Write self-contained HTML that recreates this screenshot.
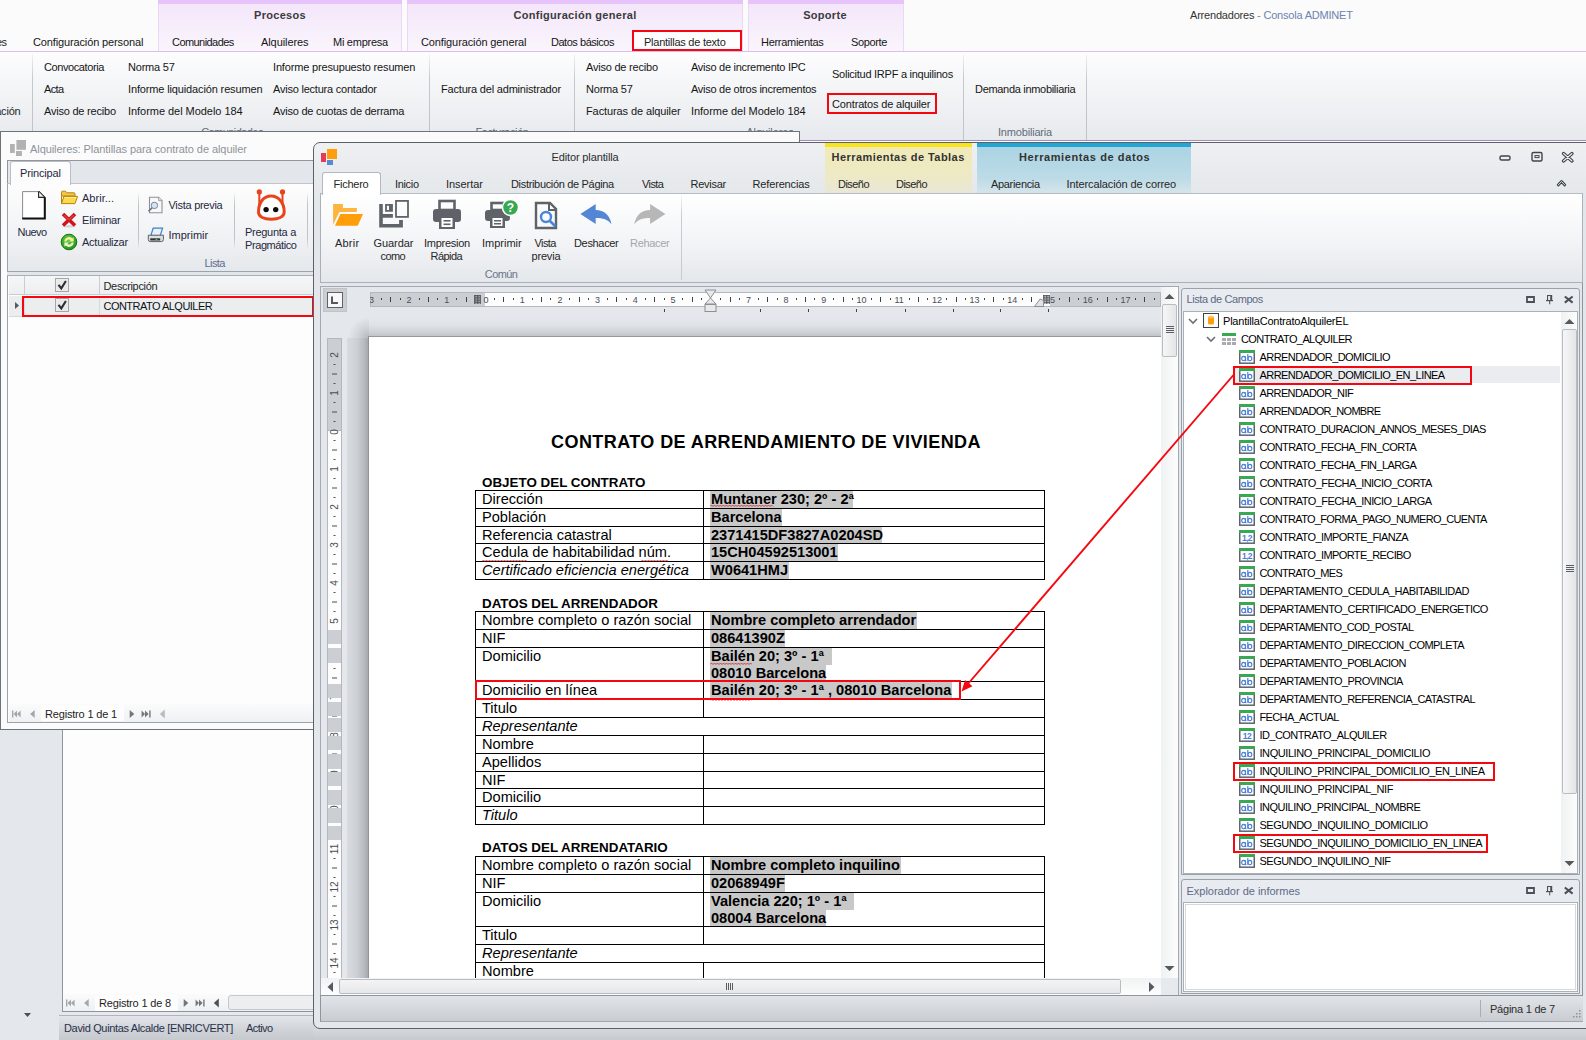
<!DOCTYPE html><html><head><meta charset="utf-8"><style>
html,body{margin:0;padding:0;}
body{width:1586px;height:1040px;overflow:hidden;position:relative;font-family:"Liberation Sans", sans-serif;background:#e4e7ec;}
div,svg{box-sizing:border-box;}
</style></head><body>

<div style="position:absolute;left:0px;top:0px;width:1586px;height:51px;background:#fbfbfb"></div>
<div style="position:absolute;left:158px;top:0px;width:244px;height:51px;background:linear-gradient(#f3e5fa,#faf5fc);border-left:1px solid #ead8f6;border-right:1px solid #ead8f6"></div>
<div style="position:absolute;left:158px;top:0px;width:244px;height:4px;background:#e6c3fa"></div>
<div style="position:absolute;top:8.19px;font-size:11px;line-height:14px;color:#3b3b3b;white-space:nowrap;font-weight:700;letter-spacing:0.3px;left:280px;transform:translateX(-50%);">Procesos</div>
<div style="position:absolute;left:407px;top:0px;width:336px;height:51px;background:linear-gradient(#f3e5fa,#faf5fc);border-left:1px solid #ead8f6;border-right:1px solid #ead8f6"></div>
<div style="position:absolute;left:407px;top:0px;width:336px;height:4px;background:#e6c3fa"></div>
<div style="position:absolute;top:8.19px;font-size:11px;line-height:14px;color:#3b3b3b;white-space:nowrap;font-weight:700;letter-spacing:0.3px;left:575px;transform:translateX(-50%);">Configuración general</div>
<div style="position:absolute;left:748px;top:0px;width:156px;height:51px;background:linear-gradient(#f3e5fa,#faf5fc);border-left:1px solid #ead8f6;border-right:1px solid #ead8f6"></div>
<div style="position:absolute;left:748px;top:0px;width:156px;height:4px;background:#e6c3fa"></div>
<div style="position:absolute;top:8.19px;font-size:11px;line-height:14px;color:#3b3b3b;white-space:nowrap;font-weight:700;letter-spacing:0.3px;left:825px;transform:translateX(-50%);">Soporte</div>
<div style="position:absolute;top:35.19px;font-size:11px;line-height:14px;color:#262626;white-space:nowrap;letter-spacing:-0.561px;right:1579.5px;">es</div>
<div style="position:absolute;top:35.19px;font-size:11px;line-height:14px;color:#161616;white-space:nowrap;letter-spacing:-0.133px;left:33px;">Configuración personal</div>
<div style="position:absolute;top:35.19px;font-size:11px;line-height:14px;color:#161616;white-space:nowrap;letter-spacing:-0.563px;left:172px;">Comunidades</div>
<div style="position:absolute;top:35.19px;font-size:11px;line-height:14px;color:#161616;white-space:nowrap;letter-spacing:-0.085px;left:261px;">Alquileres</div>
<div style="position:absolute;top:35.19px;font-size:11px;line-height:14px;color:#161616;white-space:nowrap;letter-spacing:-0.263px;left:333px;">Mi empresa</div>
<div style="position:absolute;top:35.19px;font-size:11px;line-height:14px;color:#161616;white-space:nowrap;letter-spacing:-0.112px;left:421px;">Configuración general</div>
<div style="position:absolute;top:35.19px;font-size:11px;line-height:14px;color:#161616;white-space:nowrap;letter-spacing:-0.469px;left:551px;">Datos básicos</div>
<div style="position:absolute;top:35.19px;font-size:11px;line-height:14px;color:#161616;white-space:nowrap;letter-spacing:-0.293px;left:761px;">Herramientas</div>
<div style="position:absolute;top:35.19px;font-size:11px;line-height:14px;color:#161616;white-space:nowrap;letter-spacing:-0.355px;left:851px;">Soporte</div>
<div style="position:absolute;left:632px;top:30px;width:110px;height:22px;background:#fdfdfd"></div>
<div style="position:absolute;top:35.19px;font-size:11px;line-height:14px;color:#1e1e1e;white-space:nowrap;letter-spacing:-0.246px;left:644px;">Plantillas de texto</div>
<div style="position:absolute;left:632px;top:30px;width:110px;height:21px;border:2px solid #f5070f"></div>
<div style="position:absolute;left:1190px;top:8px;font-size:11px;line-height:14px;white-space:nowrap;letter-spacing:-0.2px;color:#333">Arrendadores <span style="color:#6b83b0">- Consola ADMINET</span></div>
<div style="position:absolute;left:0px;top:51px;width:1586px;height:1px;background:#dcbcf0"></div>
<div style="position:absolute;left:0px;top:52px;width:1586px;height:89px;background:linear-gradient(#fdfdfe,#f3f4f6 45%,#e6e9ed)"></div>
<div style="position:absolute;left:0px;top:140px;width:1586px;height:1px;background:#a88cb8"></div>
<div style="position:absolute;left:32px;top:54px;width:1px;height:86px;background:linear-gradient(rgba(200,204,210,0.2),#c4c8ce 30%,#bfc3c9)"></div>
<div style="position:absolute;left:429px;top:54px;width:1px;height:86px;background:linear-gradient(rgba(200,204,210,0.2),#c4c8ce 30%,#bfc3c9)"></div>
<div style="position:absolute;left:574px;top:54px;width:1px;height:86px;background:linear-gradient(rgba(200,204,210,0.2),#c4c8ce 30%,#bfc3c9)"></div>
<div style="position:absolute;left:963px;top:54px;width:1px;height:86px;background:linear-gradient(rgba(200,204,210,0.2),#c4c8ce 30%,#bfc3c9)"></div>
<div style="position:absolute;left:1086px;top:54px;width:1px;height:86px;background:linear-gradient(rgba(200,204,210,0.2),#c4c8ce 30%,#bfc3c9)"></div>
<div style="position:absolute;top:104.19px;font-size:11px;line-height:14px;color:#262626;white-space:nowrap;letter-spacing:-0.191px;right:1565.5px;">Configuración</div>
<div style="position:absolute;top:60.19px;font-size:11px;line-height:14px;color:#161616;white-space:nowrap;letter-spacing:-0.409px;left:44px;">Convocatoria</div>
<div style="position:absolute;top:82.19px;font-size:11px;line-height:14px;color:#161616;white-space:nowrap;letter-spacing:-0.653px;left:44px;">Acta</div>
<div style="position:absolute;top:104.19px;font-size:11px;line-height:14px;color:#161616;white-space:nowrap;letter-spacing:-0.215px;left:44px;">Aviso de recibo</div>
<div style="position:absolute;top:60.19px;font-size:11px;line-height:14px;color:#161616;white-space:nowrap;letter-spacing:-0.204px;left:128px;">Norma 57</div>
<div style="position:absolute;top:82.19px;font-size:11px;line-height:14px;color:#161616;white-space:nowrap;letter-spacing:-0.139px;left:128px;">Informe liquidación resumen</div>
<div style="position:absolute;top:104.19px;font-size:11px;line-height:14px;color:#161616;white-space:nowrap;letter-spacing:-0.041px;left:128px;">Informe del Modelo 184</div>
<div style="position:absolute;top:60.19px;font-size:11px;line-height:14px;color:#161616;white-space:nowrap;letter-spacing:-0.167px;left:273px;">Informe presupuesto resumen</div>
<div style="position:absolute;top:82.19px;font-size:11px;line-height:14px;color:#161616;white-space:nowrap;letter-spacing:-0.22px;left:273px;">Aviso lectura contador</div>
<div style="position:absolute;top:104.19px;font-size:11px;line-height:14px;color:#161616;white-space:nowrap;letter-spacing:-0.218px;left:273px;">Aviso de cuotas de derrama</div>
<div style="position:absolute;top:82.19px;font-size:11px;line-height:14px;color:#161616;white-space:nowrap;letter-spacing:-0.191px;left:441px;">Factura del administrador</div>
<div style="position:absolute;top:60.19px;font-size:11px;line-height:14px;color:#161616;white-space:nowrap;letter-spacing:-0.215px;left:586px;">Aviso de recibo</div>
<div style="position:absolute;top:82.19px;font-size:11px;line-height:14px;color:#161616;white-space:nowrap;letter-spacing:-0.204px;left:586px;">Norma 57</div>
<div style="position:absolute;top:104.19px;font-size:11px;line-height:14px;color:#161616;white-space:nowrap;letter-spacing:-0.105px;left:586px;">Facturas de alquiler</div>
<div style="position:absolute;top:60.19px;font-size:11px;line-height:14px;color:#161616;white-space:nowrap;letter-spacing:-0.281px;left:691px;">Aviso de incremento IPC</div>
<div style="position:absolute;top:82.19px;font-size:11px;line-height:14px;color:#161616;white-space:nowrap;letter-spacing:-0.277px;left:691px;">Aviso de otros incrementos</div>
<div style="position:absolute;top:104.19px;font-size:11px;line-height:14px;color:#161616;white-space:nowrap;letter-spacing:-0.041px;left:691px;">Informe del Modelo 184</div>
<div style="position:absolute;top:67.19px;font-size:11px;line-height:14px;color:#161616;white-space:nowrap;letter-spacing:-0.256px;left:832px;">Solicitud IRPF a inquilinos</div>
<div style="position:absolute;top:97.19px;font-size:11px;line-height:14px;color:#161616;white-space:nowrap;letter-spacing:-0.152px;left:832px;">Contratos de alquiler</div>
<div style="position:absolute;top:82.19px;font-size:11px;line-height:14px;color:#161616;white-space:nowrap;letter-spacing:-0.307px;left:975px;">Demanda inmobiliaria</div>
<div style="position:absolute;top:125.19px;font-size:11px;line-height:14px;color:#5f6b7a;white-space:nowrap;letter-spacing:-0.563px;left:232px;transform:translateX(-50%);">Comunidades</div>
<div style="position:absolute;top:125.19px;font-size:11px;line-height:14px;color:#5f6b7a;white-space:nowrap;letter-spacing:-0.387px;left:502px;transform:translateX(-50%);">Facturación</div>
<div style="position:absolute;top:125.19px;font-size:11px;line-height:14px;color:#5f6b7a;white-space:nowrap;letter-spacing:-0.085px;left:770px;transform:translateX(-50%);">Alquileres</div>
<div style="position:absolute;top:125.19px;font-size:11px;line-height:14px;color:#5f6b7a;white-space:nowrap;letter-spacing:-0.185px;left:1025px;transform:translateX(-50%);">Inmobiliaria</div>
<div style="position:absolute;left:827px;top:93px;width:110px;height:21px;border:2px solid #f5070f"></div>
<div style="position:absolute;left:0px;top:141px;width:62px;height:874px;background:#e4e7ec"></div>
<div style="position:absolute;left:62px;top:141px;width:1524px;height:874px;background:#fdfdfd;border-left:1px solid #8f969e"></div>
<div style="position:absolute;left:63px;top:994px;width:1523px;height:17px;background:linear-gradient(#fbfbfb,#eef0f2)"></div>
<svg style="position:absolute;left:64.7px;top:996.5px" width="160" height="12" viewBox="0 0 160 12"><path d="M1 2.5h1.4v7H1z M2.6 6L6 2.5v7z M6 6L9.6 2.5v7z" fill="#a3a7ac"/><path d="M19.1 6L23.7 2v8z" fill="#a3a7ac"/><path d="M118.7 2v8L123.3 6z" fill="#72777d"/><path d="M130.6 2.5v7L134 6z M134 2.5v7L137.6 6z M138.2 2.5h1.4v7h-1.4z" fill="#72777d"/><path d="M153.8 1.5v9L148.8 6z" fill="#4d5258"/></svg>
<div style="position:absolute;left:95px;top:995px;width:83px;height:16px;background:#fdfdfd"></div>
<div style="position:absolute;top:995.69px;font-size:11px;line-height:14px;color:#1e1e1e;white-space:nowrap;letter-spacing:-0.181px;left:99px;">Registro 1 de 8</div>
<div style="position:absolute;left:228px;top:995px;width:1358px;height:15px;background:#eceef0;border:1px solid #c5c9ce;border-radius:3px"></div>
<div style="position:absolute;left:62px;top:1011px;width:1524px;height:4px;background:#e6e9ed;border-top:1px solid #8e949b"></div>
<div style="position:absolute;left:59px;top:1015px;width:1527px;height:25px;background:linear-gradient(#e2e5e9,#cfd2d6 60%,#c6c9ce);border-top:1px solid #b0b5bb"></div>
<svg style="position:absolute;left:22px;top:1011px" width="12" height="8" viewBox="0 0 12 8"><path d="M2 2h7l-3.5 4z" fill="#4a4f55"/></svg>
<div style="position:absolute;top:1021.19px;font-size:11px;line-height:14px;color:#27314a;white-space:nowrap;letter-spacing:-0.341px;left:64px;">David Quintas Alcalde [ENRICVERT]</div>
<div style="position:absolute;top:1021.19px;font-size:11px;line-height:14px;color:#27314a;white-space:nowrap;letter-spacing:-0.568px;left:246px;">Activo</div>
<div style="position:absolute;left:0px;top:131px;width:800px;height:599px;background:#fbfbfb;border:1px solid #6c737b"></div>
<svg style="position:absolute;left:9px;top:139px" width="18" height="18" viewBox="0 0 18 18"><rect x="7.4" y="1" width="9.6" height="9.8" fill="#b2b2b2"/><rect x="1" y="5" width="4.8" height="9" fill="#b2b2b2"/><rect x="7" y="12" width="5.9" height="5" fill="#b2b2b2"/></svg>
<div style="position:absolute;top:141.69px;font-size:11px;line-height:14px;color:#8e939a;white-space:nowrap;letter-spacing:-0.068px;left:30px;">Alquileres: Plantillas para contrato de alquiler</div>
<div style="position:absolute;left:7px;top:160px;width:793px;height:23px;background:#e3e6ea;border-top:1px solid #8f969e;border-left:1px solid #8f969e"></div>
<div style="position:absolute;left:7px;top:183px;width:793px;height:89px;background:linear-gradient(#fdfdfd,#f2f3f5 55%,#e5e8ec);border-left:1px solid #9ca3ab;border-top:1px solid #c1c6cc;border-bottom:1px solid #9ca3ab"></div>
<div style="position:absolute;left:10px;top:161px;width:61px;height:24px;background:linear-gradient(#fdfdfd,#fcfcfd);border:1px solid #b9bec5;border-bottom:none;border-radius:3px 3px 0 0"></div>
<div style="position:absolute;top:166.19px;font-size:11px;line-height:14px;color:#1f2940;white-space:nowrap;letter-spacing:-0.147px;left:20px;">Principal</div>
<div style="position:absolute;left:138px;top:193px;width:1px;height:56px;background:linear-gradient(rgba(190,195,200,0.1),#bfc4ca 20%,#bfc4ca 80%,rgba(190,195,200,0.1))"></div>
<div style="position:absolute;left:234px;top:193px;width:1px;height:56px;background:linear-gradient(rgba(190,195,200,0.1),#bfc4ca 20%,#bfc4ca 80%,rgba(190,195,200,0.1))"></div>
<div style="position:absolute;left:307px;top:193px;width:1px;height:56px;background:linear-gradient(rgba(190,195,200,0.1),#bfc4ca 20%,#bfc4ca 80%,rgba(190,195,200,0.1))"></div>
<svg style="position:absolute;left:21px;top:190px" width="26" height="30" viewBox="0 0 26 30"><path d="M1.6 1.6H17.6L23.8 7.8V28.6H1.6z" fill="#fff" stroke="#8a8a8a" stroke-width="1"/><path d="M17.6 1.6L23.8 7.8V28.6H1.2" fill="none" stroke="#111" stroke-width="2"/><path d="M17.6 1.6V7.4H23.4" fill="#f2f2f2" stroke="#222" stroke-width="1.1"/></svg>
<div style="position:absolute;top:225.19px;font-size:11px;line-height:14px;color:#1f2940;white-space:nowrap;letter-spacing:-0.562px;left:17.5px;">Nuevo</div>
<svg style="position:absolute;left:60px;top:190px" width="19" height="15" viewBox="0 0 19 15"><path d="M1.5 2.2Q1.5 1.2 2.5 1.2H5.5L7 2.8H14Q15 2.8 15 3.8V6H1.5z" fill="#f3c64a" stroke="#b98407" stroke-width="1"/><path d="M1.5 13.6L3.8 6.4H17.6L15 13.6z" fill="#fbd94e" stroke="#b98407" stroke-width="1"/><path d="M1.5 5v8.6" stroke="#b98407" stroke-width="1"/><path d="M4.5 7.5H16.5" stroke="#fff3b0" stroke-width="0.8"/></svg>
<div style="position:absolute;top:191.19px;font-size:11px;line-height:14px;color:#1f2940;white-space:nowrap;letter-spacing:0.033px;left:82px;">Abrir...</div>
<svg style="position:absolute;left:61px;top:212px" width="16" height="16" viewBox="0 0 16 16"><ellipse cx="8" cy="14.3" rx="6.5" ry="1.2" fill="rgba(0,0,0,0.13)"/><path d="M3.3 3.3L12.7 12.3M12.7 3.3L3.3 12.3" stroke="#cf141b" stroke-width="3.6" stroke-linecap="square"/><path d="M3.3 3.3L8 7.8M12.7 3.3L8 7.8" stroke="rgba(255,140,140,0.35)" stroke-width="1.2"/></svg>
<div style="position:absolute;top:212.69px;font-size:11px;line-height:14px;color:#1f2940;white-space:nowrap;letter-spacing:-0.138px;left:82px;">Eliminar</div>
<svg style="position:absolute;left:60px;top:233px" width="18" height="18" viewBox="0 0 18 18"><defs><radialGradient id="gA" cx="0.45" cy="0.35" r="0.7"><stop offset="0" stop-color="#6fd04c"/><stop offset="1" stop-color="#1f8f15"/></radialGradient></defs><circle cx="9" cy="9" r="7.8" fill="url(#gA)" stroke="#16730f" stroke-width="1"/><path d="M4.2 8.6A4.8 4.8 0 0 1 12.3 5.4L13.6 4.2V8.6H9.2L10.7 7.1A2.7 2.7 0 0 0 6.3 8.6z" fill="#f3f59a"/><path d="M13.8 9.4A4.8 4.8 0 0 1 5.7 12.6L4.4 13.8V9.4H8.8L7.3 10.9A2.7 2.7 0 0 0 11.7 9.4z" fill="#e9f7d0"/></svg>
<div style="position:absolute;top:234.69px;font-size:11px;line-height:14px;color:#1f2940;white-space:nowrap;letter-spacing:-0.243px;left:82px;">Actualizar</div>
<svg style="position:absolute;left:147px;top:196px" width="17" height="18" viewBox="0 0 17 18"><path d="M2.5 1.2H11.6L15 4.6V16.7H2.5z" fill="#f8f8f9" stroke="#8d9197" stroke-width="1.1"/><path d="M11.6 1.2V4.6H15" fill="#e6e7e9" stroke="#8d9197" stroke-width="0.8"/><circle cx="7.4" cy="9.4" r="3.2" fill="#d2e6fa" stroke="#7a8592" stroke-width="1"/><path d="M5 11.9L1.5 15.3" stroke="#6a6f76" stroke-width="1.5"/></svg>
<div style="position:absolute;top:198.19px;font-size:11px;line-height:14px;color:#1f2940;white-space:nowrap;letter-spacing:-0.281px;left:168.5px;">Vista previa</div>
<svg style="position:absolute;left:147px;top:227px" width="18" height="16" viewBox="0 0 18 16"><path d="M6.2 1.2H15.6L13.2 8.6H3.8z" fill="#e8f0f8" stroke="#3a7fd0" stroke-width="1.2"/><path d="M1.3 8.2H16.4V12.6Q16.4 14.6 14.4 14.6H3.3Q1.3 14.6 1.3 12.6z" fill="#dcdee1" stroke="#5d6166" stroke-width="1"/><rect x="3.2" y="11.3" width="10" height="2.2" fill="#2f3236"/><circle cx="9.5" cy="12.6" r="0.9" fill="#5ad04a"/></svg>
<div style="position:absolute;top:227.69px;font-size:11px;line-height:14px;color:#1f2940;white-space:nowrap;letter-spacing:-0.01px;left:168.5px;">Imprimir</div>
<svg style="position:absolute;left:254px;top:188px" width="34" height="34" viewBox="0 0 34 34"><circle cx="5.3" cy="3.9" r="2.6" fill="#e8431a"/><circle cx="28.5" cy="3.9" r="2.6" fill="#e8431a"/><path d="M5.3 4V17M28.5 4V17" stroke="#e8431a" stroke-width="2"/><path d="M4.5 24C4.5 14 10 8 17 8C24 8 30.2 14 30.2 24C30.2 29 24 31.2 17.3 31.2C10.5 31.2 4.5 29 4.5 24Z" fill="#fff" stroke="#e8431a" stroke-width="3"/><circle cx="12.1" cy="21.6" r="2.7" fill="#0d0d0d"/><circle cx="21.7" cy="21.6" r="2.7" fill="#0d0d0d"/></svg>
<div style="position:absolute;top:224.69px;font-size:11px;line-height:14px;color:#1f2940;white-space:nowrap;letter-spacing:-0.279px;left:245px;">Pregunta a</div>
<div style="position:absolute;top:237.69px;font-size:11px;line-height:14px;color:#1f2940;white-space:nowrap;letter-spacing:-0.409px;left:245px;">Pragmático</div>
<div style="position:absolute;top:256.19px;font-size:11px;line-height:14px;color:#5d6d8f;white-space:nowrap;letter-spacing:-0.582px;left:204.5px;">Lista</div>
<div style="position:absolute;left:7px;top:272px;width:793px;height:3px;background:#e2e5e9"></div>
<div style="position:absolute;left:7px;top:275px;width:793px;height:448px;background:#fdfdfd;border-left:1px solid #9ca3ab;border-top:1px solid #a9afb6"></div>
<div style="position:absolute;left:9px;top:276px;width:791px;height:19px;background:linear-gradient(#f5f6f7,#eceef0);border-bottom:1px solid #c9cdd2"></div>
<div style="position:absolute;left:24px;top:276px;width:1px;height:19px;background:#c9cdd2"></div>
<div style="position:absolute;left:99px;top:276px;width:1px;height:19px;background:#c9cdd2"></div>
<svg style="position:absolute;left:55px;top:278px" width="15" height="15" viewBox="0 0 15 15"><rect x="0.5" y="0.5" width="13" height="13" fill="#f1f1f1" stroke="#a4a6a9"/><rect x="1.5" y="1.5" width="11" height="11" fill="#e9e9ea"/><path d="M3.5 6.8l2.8 3.6 4.6-7.4" fill="none" stroke="#2b2f33" stroke-width="2.1"/></svg>
<div style="position:absolute;top:278.69px;font-size:11px;line-height:14px;color:#262626;white-space:nowrap;letter-spacing:-0.343px;left:103.5px;">Descripción</div>
<div style="position:absolute;left:9px;top:296px;width:791px;height:21px;background:#ebedef;border-bottom:1px solid #d5d8dc"></div>
<div style="position:absolute;left:24px;top:296px;width:1px;height:21px;background:#d5d8dc"></div>
<div style="position:absolute;left:99px;top:296px;width:1px;height:21px;background:#d5d8dc"></div>
<svg style="position:absolute;left:14px;top:301px" width="6" height="9" viewBox="0 0 6 9"><path d="M1 1v7l4-3.5z" fill="#545a61"/></svg>
<svg style="position:absolute;left:55px;top:298px" width="15" height="15" viewBox="0 0 15 15"><rect x="0.5" y="0.5" width="13" height="13" fill="#f1f1f1" stroke="#a4a6a9"/><rect x="1.5" y="1.5" width="11" height="11" fill="#e9e9ea"/><path d="M3.5 6.8l2.8 3.6 4.6-7.4" fill="none" stroke="#2b2f33" stroke-width="2.1"/></svg>
<div style="position:absolute;top:299.19px;font-size:11px;line-height:14px;color:#111;white-space:nowrap;letter-spacing:-0.524px;left:103.5px;">CONTRATO ALQUILER</div>
<div style="position:absolute;left:22px;top:296px;width:292px;height:21px;border:2px solid #f5070f"></div>
<div style="position:absolute;left:9px;top:704px;width:791px;height:18px;background:linear-gradient(#fafbfb,#eff1f3)"></div>
<svg style="position:absolute;left:11px;top:707.5px" width="160" height="12" viewBox="0 0 160 12"><path d="M1 2.5h1.4v7H1z M2.6 6L6 2.5v7z M6 6L9.6 2.5v7z" fill="#a3a7ac"/><path d="M19.1 6L23.7 2v8z" fill="#a3a7ac"/><path d="M118.7 2v8L123.3 6z" fill="#72777d"/><path d="M130.6 2.5v7L134 6z M134 2.5v7L137.6 6z M138.2 2.5h1.4v7h-1.4z" fill="#72777d"/><path d="M153.8 1.5v9L148.8 6z" fill="#b9bdc1"/></svg>
<div style="position:absolute;left:41px;top:705px;width:83px;height:16px;background:#fdfdfd"></div>
<div style="position:absolute;top:706.69px;font-size:11px;line-height:14px;color:#1e1e1e;white-space:nowrap;letter-spacing:-0.181px;left:45px;">Registro 1 de 1</div>
<div style="position:absolute;left:8px;top:722px;width:792px;height:1px;background:#9ca3ab"></div>
<div style="position:absolute;left:313px;top:142px;width:1283px;height:887px;background:linear-gradient(#eef0f2,#e3e6ea 60px,#e4e7eb);border:1px solid #5b6169;border-radius:7px 0 0 7px"></div>
<div style="position:absolute;left:321px;top:153px;width:5px;height:9px;background:#e63a55"></div>
<div style="position:absolute;left:327px;top:149px;width:10px;height:10px;background:#fe9e0a"></div>
<div style="position:absolute;left:327px;top:160px;width:6px;height:5px;background:#5a88d6"></div>
<div style="position:absolute;top:150.19px;font-size:11px;line-height:14px;color:#2d2d2d;white-space:nowrap;letter-spacing:-0.122px;left:585px;transform:translateX(-50%);">Editor plantilla</div>
<svg style="position:absolute;left:1497px;top:150px" width="80" height="14" viewBox="0 0 80 14"><rect x="3" y="6" width="10" height="4" rx="1.5" fill="none" stroke="#3f454c" stroke-width="1.4"/><rect x="35" y="2.5" width="10" height="8.5" rx="1.5" fill="none" stroke="#3f454c" stroke-width="1.4"/><rect x="38" y="5.6" width="4" height="2" fill="none" stroke="#3f454c" stroke-width="1"/><path d="M66.5 3.5l8.5 7.5M75 3.5l-8.5 7.5" stroke="#3f454c" stroke-width="3.4" stroke-linecap="round"/><path d="M66.5 3.5l8.5 7.5M75 3.5l-8.5 7.5" stroke="#eef0f2" stroke-width="1.1" stroke-linecap="round"/></svg>
<svg style="position:absolute;left:1555px;top:177px" width="14" height="12" viewBox="0 0 14 12"><path d="M3.2 8L6.5 4.5L9.8 8" fill="none" stroke="#3f454c" stroke-width="2.8" stroke-linecap="round" stroke-linejoin="round"/><path d="M3.2 8L6.5 4.5L9.8 8" fill="none" stroke="#e6e9ed" stroke-width="0.9" stroke-linecap="round"/></svg>
<div style="position:absolute;left:825px;top:143px;width:147px;height:50px;background:linear-gradient(#f1ebb6,#ede9c6 70%,#e9e7d8)"></div>
<div style="position:absolute;left:825px;top:143px;width:147px;height:4px;background:#f8e41c"></div>
<div style="position:absolute;top:150.19px;font-size:11px;line-height:14px;color:#333;white-space:nowrap;font-weight:700;letter-spacing:0.45px;left:831.5px;">Herramientas de Tablas</div>
<div style="position:absolute;left:977px;top:143px;width:214px;height:50px;background:linear-gradient(#a9d3e3,#bcdbe7 70%,#d6e4ea)"></div>
<div style="position:absolute;left:977px;top:143px;width:214px;height:4px;background:#22a6d6"></div>
<div style="position:absolute;top:150.19px;font-size:11px;line-height:14px;color:#333;white-space:nowrap;font-weight:700;letter-spacing:0.6px;left:1019px;">Herramientas de datos</div>
<div style="position:absolute;top:177.19px;font-size:11px;line-height:14px;color:#262626;white-space:nowrap;letter-spacing:-0.25px;left:333.5px;">Fichero</div>
<div style="position:absolute;top:177.19px;font-size:11px;line-height:14px;color:#262626;white-space:nowrap;letter-spacing:-0.336px;left:395px;">Inicio</div>
<div style="position:absolute;top:177.19px;font-size:11px;line-height:14px;color:#262626;white-space:nowrap;letter-spacing:-0.055px;left:446px;">Insertar</div>
<div style="position:absolute;top:177.19px;font-size:11px;line-height:14px;color:#262626;white-space:nowrap;letter-spacing:-0.327px;left:511px;">Distribución de Página</div>
<div style="position:absolute;top:177.19px;font-size:11px;line-height:14px;color:#262626;white-space:nowrap;letter-spacing:-0.6px;left:642px;">Vista</div>
<div style="position:absolute;top:177.19px;font-size:11px;line-height:14px;color:#262626;white-space:nowrap;letter-spacing:-0.271px;left:690.5px;">Revisar</div>
<div style="position:absolute;top:177.19px;font-size:11px;line-height:14px;color:#262626;white-space:nowrap;letter-spacing:-0.152px;left:752.5px;">Referencias</div>
<div style="position:absolute;top:177.19px;font-size:11px;line-height:14px;color:#262626;white-space:nowrap;letter-spacing:-0.536px;left:838px;">Diseño</div>
<div style="position:absolute;top:177.19px;font-size:11px;line-height:14px;color:#262626;white-space:nowrap;letter-spacing:-0.536px;left:896px;">Diseño</div>
<div style="position:absolute;top:177.19px;font-size:11px;line-height:14px;color:#262626;white-space:nowrap;letter-spacing:-0.32px;left:991px;">Apariencia</div>
<div style="position:absolute;top:177.19px;font-size:11px;line-height:14px;color:#262626;white-space:nowrap;letter-spacing:-0.102px;left:1066.5px;">Intercalación de correo</div>
<div style="position:absolute;left:320px;top:193px;width:1263px;height:90px;background:linear-gradient(#ffffff,#f4f5f7 50%,#e4e7eb);border:1px solid #aab0b7;border-top:1px solid #b6bcc3"></div>
<div style="position:absolute;left:322px;top:172px;width:59px;height:23px;background:#fff;border:1px solid #b2b8bf;border-bottom:none;border-radius:3px 3px 0 0"></div>
<div style="position:absolute;top:177.19px;font-size:11px;line-height:14px;color:#262626;white-space:nowrap;letter-spacing:-0.25px;left:333.5px;">Fichero</div>
<div style="position:absolute;left:681px;top:196px;width:1px;height:84px;background:linear-gradient(rgba(200,204,210,0.2),#c6cbd1 25%,#c6cbd1)"></div>
<svg style="position:absolute;left:328px;top:198px" width="40" height="34" viewBox="0 0 40 34"><path d="M5.1 6H14.9V10H28.9V13.9H11.4L5.1 26.8z" fill="#fdb441"/><path d="M12.4 16H35L29.7 27.8H7z" fill="#fe9e0a"/></svg>
<svg style="position:absolute;left:374px;top:196px" width="40" height="36" viewBox="0 0 40 36"><path d="M5.2 8.1h3.6v9.9h10.1v3.7H8.8v6.3h16.3V24h3.8v7.5H5.2z" fill="#5f636a"/><path d="M11.1 8.1h7.8v7.6h-7.8z M12.9 9.8v4.2h2.1V9.8z" fill="#5f636a" fill-rule="evenodd"/><rect x="22" y="4.9" width="12" height="16" fill="none" stroke="#5f636a" stroke-width="1.8"/></svg>
<svg style="position:absolute;left:432px;top:199px" width="30" height="31" viewBox="0 0 30 31"><rect x="7.5" y="2" width="15" height="9" fill="none" stroke="#5f6369" stroke-width="2.6"/><rect x="1" y="10" width="28" height="13" rx="3" fill="#5f6369"/><rect x="7" y="17" width="16" height="13" fill="#5f6369"/><rect x="9.5" y="19" width="11" height="9" fill="#fff"/><rect x="11.5" y="21" width="7" height="1.6" fill="#5f6369"/><rect x="11.5" y="24.5" width="7" height="1.6" fill="#5f6369"/></svg>
<svg style="position:absolute;left:484px;top:198px" width="34" height="32" viewBox="0 0 34 32"><rect x="7.5" y="5" width="12" height="7" fill="none" stroke="#5f6369" stroke-width="2.6"/><rect x="1" y="12" width="25" height="11" rx="3" fill="#5f6369"/><rect x="6" y="18" width="15" height="12" fill="#5f6369"/><rect x="8.5" y="20" width="10" height="8" fill="#fff"/><rect x="10" y="22" width="7" height="1.5" fill="#5f6369"/><rect x="10" y="25" width="7" height="1.5" fill="#5f6369"/><circle cx="26.5" cy="9.5" r="8" fill="#36a852" stroke="#fff" stroke-width="1.5"/><text x="26.5" y="14" font-size="12" font-weight="700" fill="#fff" text-anchor="middle" font-family="Liberation Sans">?</text></svg>
<svg style="position:absolute;left:534px;top:201px" width="26" height="29" viewBox="0 0 26 29"><path d="M2 2h14l6 6v19H2z" fill="none" stroke="#5f6369" stroke-width="2.4"/><path d="M15 2v7h7" fill="none" stroke="#5f6369" stroke-width="2"/><circle cx="12" cy="16" r="5" fill="none" stroke="#4a86d8" stroke-width="2.4"/><path d="M15.5 19.5l6 6" stroke="#4a86d8" stroke-width="2.6"/></svg>
<svg style="position:absolute;left:579px;top:203px" width="34" height="23" viewBox="0 0 34 23"><path d="M1.4 10.9L16.7 1V7C25 7 31 12 32.5 21.3C29 16.5 24 15 16.7 15V21z" fill="#5486d6"/></svg>
<svg style="position:absolute;left:633px;top:203px" width="34" height="23" viewBox="0 0 34 23"><path d="M32.4 10.9L17.1 1V7C8.8 7 2.8 12 1.3 21.3C4.8 16.5 9.8 15 17.1 15V21z" fill="#b7b7b7"/></svg>
<div style="position:absolute;top:236.19px;font-size:11px;line-height:14px;color:#262626;white-space:nowrap;letter-spacing:0.205px;left:335px;">Abrir</div>
<div style="position:absolute;top:236.19px;font-size:11px;line-height:14px;color:#262626;white-space:nowrap;letter-spacing:-0.057px;left:373.5px;">Guardar</div>
<div style="position:absolute;top:249.19px;font-size:11px;line-height:14px;color:#262626;white-space:nowrap;letter-spacing:-0.595px;left:380.5px;">como</div>
<div style="position:absolute;top:236.19px;font-size:11px;line-height:14px;color:#262626;white-space:nowrap;letter-spacing:-0.27px;left:424px;">Impresion</div>
<div style="position:absolute;top:249.19px;font-size:11px;line-height:14px;color:#262626;white-space:nowrap;letter-spacing:-0.53px;left:430.5px;">Rápida</div>
<div style="position:absolute;top:236.19px;font-size:11px;line-height:14px;color:#262626;white-space:nowrap;letter-spacing:-0.01px;left:482px;">Imprimir</div>
<div style="position:absolute;top:236.19px;font-size:11px;line-height:14px;color:#262626;white-space:nowrap;letter-spacing:-0.6px;left:534.5px;">Vista</div>
<div style="position:absolute;top:249.19px;font-size:11px;line-height:14px;color:#262626;white-space:nowrap;letter-spacing:-0.193px;left:531.5px;">previa</div>
<div style="position:absolute;top:236.19px;font-size:11px;line-height:14px;color:#262626;white-space:nowrap;letter-spacing:-0.334px;left:574px;">Deshacer</div>
<div style="position:absolute;top:236.19px;font-size:11px;line-height:14px;color:#a4a7ab;white-space:nowrap;letter-spacing:-0.299px;left:630px;">Rehacer</div>
<div style="position:absolute;top:267.19px;font-size:11px;line-height:14px;color:#6a7689;white-space:nowrap;letter-spacing:-0.627px;left:501px;transform:translateX(-50%);">Común</div>
<div style="position:absolute;left:320px;top:286px;width:859px;height:710px;background:#e4e7eb;border-top:1px solid #a3a9b0;border-left:1px solid #a3a9b0;border-right:1px solid #a3a9b0"></div>
<div style="position:absolute;left:323px;top:288px;width:24px;height:24px;background:#cbced3;border:1px solid #c0c4c9"></div>
<div style="position:absolute;left:327px;top:292px;width:16px;height:16px;background:#f8f8f8;border:1px solid #5e6269"></div>
<svg style="position:absolute;left:330px;top:295px" width="10" height="10" viewBox="0 0 10 10"><path d="M2 1.5v6.5h6" fill="none" stroke="#555a60" stroke-width="2"/></svg>
<div style="position:absolute;left:370px;top:292px;width:791px;height:15px;background:#cbced3;border:1px solid #b4b8be"></div>
<div style="position:absolute;left:485px;top:293px;width:565px;height:13px;background:#fdfdfd"></div>
<svg style="position:absolute;left:370px;top:292px" width="791" height="15" viewBox="0 0 791 15"><text x="1.4" y="10.8" font-size="9" fill="#4a4f57" text-anchor="middle" font-family="Liberation Sans">3</text><rect x="11" y="6" width="1" height="2" fill="#3e434a"/><rect x="20" y="5" width="1" height="5" fill="#3e434a"/><rect x="30" y="6" width="1" height="2" fill="#3e434a"/><text x="39.1" y="10.8" font-size="9" fill="#4a4f57" text-anchor="middle" font-family="Liberation Sans">2</text><rect x="49" y="6" width="1" height="2" fill="#3e434a"/><rect x="58" y="5" width="1" height="5" fill="#3e434a"/><rect x="67" y="6" width="1" height="2" fill="#3e434a"/><text x="76.8" y="10.8" font-size="9" fill="#4a4f57" text-anchor="middle" font-family="Liberation Sans">1</text><rect x="86" y="6" width="1" height="2" fill="#3e434a"/><rect x="96" y="5" width="1" height="5" fill="#3e434a"/><rect x="124" y="6" width="1" height="2" fill="#3e434a"/><rect x="133" y="5" width="1" height="5" fill="#3e434a"/><rect x="143" y="6" width="1" height="2" fill="#3e434a"/><text x="152.2" y="10.8" font-size="9" fill="#4a4f57" text-anchor="middle" font-family="Liberation Sans">1</text><rect x="162" y="6" width="1" height="2" fill="#3e434a"/><rect x="171" y="5" width="1" height="5" fill="#3e434a"/><rect x="180" y="6" width="1" height="2" fill="#3e434a"/><text x="189.9" y="10.8" font-size="9" fill="#4a4f57" text-anchor="middle" font-family="Liberation Sans">2</text><rect x="199" y="6" width="1" height="2" fill="#3e434a"/><rect x="209" y="5" width="1" height="5" fill="#3e434a"/><rect x="218" y="6" width="1" height="2" fill="#3e434a"/><text x="227.6" y="10.8" font-size="9" fill="#4a4f57" text-anchor="middle" font-family="Liberation Sans">3</text><rect x="237" y="6" width="1" height="2" fill="#3e434a"/><rect x="246" y="5" width="1" height="5" fill="#3e434a"/><rect x="256" y="6" width="1" height="2" fill="#3e434a"/><text x="265.3" y="10.8" font-size="9" fill="#4a4f57" text-anchor="middle" font-family="Liberation Sans">4</text><rect x="275" y="6" width="1" height="2" fill="#3e434a"/><rect x="284" y="5" width="1" height="5" fill="#3e434a"/><rect x="294" y="6" width="1" height="2" fill="#3e434a"/><text x="303.0" y="10.8" font-size="9" fill="#4a4f57" text-anchor="middle" font-family="Liberation Sans">5</text><rect x="312" y="6" width="1" height="2" fill="#3e434a"/><rect x="322" y="5" width="1" height="5" fill="#3e434a"/><rect x="331" y="6" width="1" height="2" fill="#3e434a"/><rect x="350" y="6" width="1" height="2" fill="#3e434a"/><rect x="360" y="5" width="1" height="5" fill="#3e434a"/><rect x="369" y="6" width="1" height="2" fill="#3e434a"/><text x="378.4" y="10.8" font-size="9" fill="#4a4f57" text-anchor="middle" font-family="Liberation Sans">7</text><rect x="388" y="6" width="1" height="2" fill="#3e434a"/><rect x="397" y="5" width="1" height="5" fill="#3e434a"/><rect x="407" y="6" width="1" height="2" fill="#3e434a"/><text x="416.1" y="10.8" font-size="9" fill="#4a4f57" text-anchor="middle" font-family="Liberation Sans">8</text><rect x="426" y="6" width="1" height="2" fill="#3e434a"/><rect x="435" y="5" width="1" height="5" fill="#3e434a"/><rect x="444" y="6" width="1" height="2" fill="#3e434a"/><text x="453.8" y="10.8" font-size="9" fill="#4a4f57" text-anchor="middle" font-family="Liberation Sans">9</text><rect x="463" y="6" width="1" height="2" fill="#3e434a"/><rect x="473" y="5" width="1" height="5" fill="#3e434a"/><rect x="482" y="6" width="1" height="2" fill="#3e434a"/><text x="491.5" y="10.8" font-size="9" fill="#4a4f57" text-anchor="middle" font-family="Liberation Sans">10</text><rect x="501" y="6" width="1" height="2" fill="#3e434a"/><rect x="510" y="5" width="1" height="5" fill="#3e434a"/><rect x="520" y="6" width="1" height="2" fill="#3e434a"/><text x="529.2" y="10.8" font-size="9" fill="#4a4f57" text-anchor="middle" font-family="Liberation Sans">11</text><rect x="539" y="6" width="1" height="2" fill="#3e434a"/><rect x="548" y="5" width="1" height="5" fill="#3e434a"/><rect x="557" y="6" width="1" height="2" fill="#3e434a"/><text x="566.9" y="10.8" font-size="9" fill="#4a4f57" text-anchor="middle" font-family="Liberation Sans">12</text><rect x="576" y="6" width="1" height="2" fill="#3e434a"/><rect x="586" y="5" width="1" height="5" fill="#3e434a"/><rect x="595" y="6" width="1" height="2" fill="#3e434a"/><text x="604.6" y="10.8" font-size="9" fill="#4a4f57" text-anchor="middle" font-family="Liberation Sans">13</text><rect x="614" y="6" width="1" height="2" fill="#3e434a"/><rect x="623" y="5" width="1" height="5" fill="#3e434a"/><rect x="633" y="6" width="1" height="2" fill="#3e434a"/><text x="642.3" y="10.8" font-size="9" fill="#4a4f57" text-anchor="middle" font-family="Liberation Sans">14</text><rect x="652" y="6" width="1" height="2" fill="#3e434a"/><rect x="661" y="5" width="1" height="5" fill="#3e434a"/><rect x="689" y="6" width="1" height="2" fill="#3e434a"/><rect x="699" y="5" width="1" height="5" fill="#3e434a"/><rect x="708" y="6" width="1" height="2" fill="#3e434a"/><text x="717.7" y="10.8" font-size="9" fill="#4a4f57" text-anchor="middle" font-family="Liberation Sans">16</text><rect x="727" y="6" width="1" height="2" fill="#3e434a"/><rect x="737" y="5" width="1" height="5" fill="#3e434a"/><rect x="746" y="6" width="1" height="2" fill="#3e434a"/><text x="755.4" y="10.8" font-size="9" fill="#4a4f57" text-anchor="middle" font-family="Liberation Sans">17</text><rect x="765" y="6" width="1" height="2" fill="#3e434a"/><rect x="774" y="5" width="1" height="5" fill="#3e434a"/><rect x="784" y="6" width="1" height="2" fill="#3e434a"/><text x="116.0" y="10.8" font-size="9" fill="#4a4f57" text-anchor="middle" font-family="Liberation Sans">0</text><g fill="#50555c"><rect x="104.0" y="3.0" width="0.8" height="9"/><rect x="105.5" y="3.0" width="0.8" height="9"/><rect x="107.0" y="3.0" width="0.8" height="9"/><rect x="108.5" y="3.0" width="0.8" height="9"/><rect x="110.0" y="3.0" width="0.8" height="9"/><rect x="104.0" y="3.0" width="6.8" height="0.8"/><rect x="104.0" y="4.8" width="6.8" height="0.8"/><rect x="104.0" y="6.6" width="6.8" height="0.8"/><rect x="104.0" y="8.4" width="6.8" height="0.8"/><rect x="104.0" y="10.2" width="6.8" height="0.8"/></g><g fill="#50555c"><rect x="673.0" y="3.0" width="0.8" height="9"/><rect x="674.5" y="3.0" width="0.8" height="9"/><rect x="676.0" y="3.0" width="0.8" height="9"/><rect x="677.5" y="3.0" width="0.8" height="9"/><rect x="679.0" y="3.0" width="0.8" height="9"/><rect x="673.0" y="3.0" width="6.8" height="0.8"/><rect x="673.0" y="4.8" width="6.8" height="0.8"/><rect x="673.0" y="6.6" width="6.8" height="0.8"/><rect x="673.0" y="8.4" width="6.8" height="0.8"/><rect x="673.0" y="10.2" width="6.8" height="0.8"/></g><text x="680.0" y="10.8" font-size="9" fill="#4a4f57" font-family="Liberation Sans">5</text></svg>
<div style="position:absolute;left:664px;top:309px;width:1px;height:3px;background:#3e434a"></div>
<div style="position:absolute;left:760px;top:309px;width:1px;height:3px;background:#3e434a"></div>
<div style="position:absolute;left:808px;top:309px;width:1px;height:3px;background:#3e434a"></div>
<div style="position:absolute;left:856px;top:309px;width:1px;height:3px;background:#3e434a"></div>
<div style="position:absolute;left:905px;top:309px;width:1px;height:3px;background:#3e434a"></div>
<div style="position:absolute;left:953px;top:309px;width:1px;height:3px;background:#3e434a"></div>
<div style="position:absolute;left:1000px;top:309px;width:1px;height:3px;background:#3e434a"></div>
<div style="position:absolute;left:1048px;top:309px;width:1px;height:3px;background:#3e434a"></div>
<svg style="position:absolute;left:703px;top:289px" width="16" height="24" viewBox="0 0 16 24"><path d="M2 1h11l-5.5 8z" fill="#e7e9eb" stroke="#8a9096"/><path d="M2 15h11l-5.5-6z" fill="#e7e9eb" stroke="#8a9096"/><rect x="2" y="15.5" width="11" height="7" fill="#e7e9eb" stroke="#8a9096"/></svg>
<svg style="position:absolute;left:1033px;top:296px" width="12" height="12" viewBox="0 0 12 12"><path d="M1.5 10.5h9V4.5L7 3z" fill="#e1e3e6" stroke="#8a9096"/></svg>
<div style="position:absolute;left:327px;top:338px;width:15px;height:640px;background:#fdfdfd;border-left:1px solid #b4b8be;border-right:1px solid #b4b8be"></div>
<div style="position:absolute;left:327px;top:338px;width:15px;height:93px;background:#cbced3;border:1px solid #b4b8be"></div>
<svg style="position:absolute;left:327px;top:338px" width="15" height="640" viewBox="0 0 15 640"><text transform="translate(10.5,17.0) rotate(-90)" font-size="10" fill="#4a4f57" text-anchor="middle" font-family="Liberation Sans" dy="0">2</text><rect x="6.5" y="26.0" width="2" height="1" fill="#4a4f57"/><rect x="5.0" y="35.5" width="5" height="1" fill="#4a4f57"/><rect x="6.5" y="45.0" width="2" height="1" fill="#4a4f57"/><text transform="translate(10.5,55.0) rotate(-90)" font-size="10" fill="#4a4f57" text-anchor="middle" font-family="Liberation Sans" dy="0">1</text><rect x="6.5" y="64.0" width="2" height="1" fill="#4a4f57"/><rect x="5.0" y="73.5" width="5" height="1" fill="#4a4f57"/><rect x="6.5" y="83.0" width="2" height="1" fill="#4a4f57"/><rect x="6.5" y="102.0" width="2" height="1" fill="#4a4f57"/><rect x="5.0" y="111.5" width="5" height="1" fill="#4a4f57"/><rect x="6.5" y="121.0" width="2" height="1" fill="#4a4f57"/><text transform="translate(10.5,131.0) rotate(-90)" font-size="10" fill="#4a4f57" text-anchor="middle" font-family="Liberation Sans" dy="0">1</text><rect x="6.5" y="140.0" width="2" height="1" fill="#4a4f57"/><rect x="5.0" y="149.5" width="5" height="1" fill="#4a4f57"/><rect x="6.5" y="159.0" width="2" height="1" fill="#4a4f57"/><text transform="translate(10.5,169.0) rotate(-90)" font-size="10" fill="#4a4f57" text-anchor="middle" font-family="Liberation Sans" dy="0">2</text><rect x="6.5" y="178.0" width="2" height="1" fill="#4a4f57"/><rect x="5.0" y="187.5" width="5" height="1" fill="#4a4f57"/><rect x="6.5" y="197.0" width="2" height="1" fill="#4a4f57"/><text transform="translate(10.5,207.0) rotate(-90)" font-size="10" fill="#4a4f57" text-anchor="middle" font-family="Liberation Sans" dy="0">3</text><rect x="6.5" y="216.0" width="2" height="1" fill="#4a4f57"/><rect x="5.0" y="225.5" width="5" height="1" fill="#4a4f57"/><rect x="6.5" y="235.0" width="2" height="1" fill="#4a4f57"/><text transform="translate(10.5,245.0) rotate(-90)" font-size="10" fill="#4a4f57" text-anchor="middle" font-family="Liberation Sans" dy="0">4</text><rect x="6.5" y="254.0" width="2" height="1" fill="#4a4f57"/><rect x="5.0" y="263.5" width="5" height="1" fill="#4a4f57"/><rect x="6.5" y="273.0" width="2" height="1" fill="#4a4f57"/><text transform="translate(10.5,283.0) rotate(-90)" font-size="10" fill="#4a4f57" text-anchor="middle" font-family="Liberation Sans" dy="0">5</text><rect x="6.5" y="292.0" width="2" height="1" fill="#4a4f57"/><rect x="5.0" y="301.5" width="5" height="1" fill="#4a4f57"/><rect x="6.5" y="311.0" width="2" height="1" fill="#4a4f57"/><text transform="translate(10.5,321.0) rotate(-90)" font-size="10" fill="#4a4f57" text-anchor="middle" font-family="Liberation Sans" dy="0">6</text><rect x="6.5" y="330.0" width="2" height="1" fill="#4a4f57"/><rect x="5.0" y="339.5" width="5" height="1" fill="#4a4f57"/><rect x="6.5" y="349.0" width="2" height="1" fill="#4a4f57"/><text transform="translate(10.5,359.0) rotate(-90)" font-size="10" fill="#4a4f57" text-anchor="middle" font-family="Liberation Sans" dy="0">7</text><rect x="6.5" y="368.0" width="2" height="1" fill="#4a4f57"/><rect x="5.0" y="377.5" width="5" height="1" fill="#4a4f57"/><rect x="6.5" y="387.0" width="2" height="1" fill="#4a4f57"/><text transform="translate(10.5,397.0) rotate(-90)" font-size="10" fill="#4a4f57" text-anchor="middle" font-family="Liberation Sans" dy="0">8</text><rect x="6.5" y="406.0" width="2" height="1" fill="#4a4f57"/><rect x="5.0" y="415.5" width="5" height="1" fill="#4a4f57"/><rect x="6.5" y="425.0" width="2" height="1" fill="#4a4f57"/><text transform="translate(10.5,435.0) rotate(-90)" font-size="10" fill="#4a4f57" text-anchor="middle" font-family="Liberation Sans" dy="0">9</text><rect x="6.5" y="444.0" width="2" height="1" fill="#4a4f57"/><rect x="5.0" y="453.5" width="5" height="1" fill="#4a4f57"/><rect x="6.5" y="463.0" width="2" height="1" fill="#4a4f57"/><text transform="translate(10.5,473.0) rotate(-90)" font-size="10" fill="#4a4f57" text-anchor="middle" font-family="Liberation Sans" dy="0">10</text><rect x="6.5" y="482.0" width="2" height="1" fill="#4a4f57"/><rect x="5.0" y="491.5" width="5" height="1" fill="#4a4f57"/><rect x="6.5" y="501.0" width="2" height="1" fill="#4a4f57"/><text transform="translate(10.5,511.0) rotate(-90)" font-size="10" fill="#4a4f57" text-anchor="middle" font-family="Liberation Sans" dy="0">11</text><rect x="6.5" y="520.0" width="2" height="1" fill="#4a4f57"/><rect x="5.0" y="529.5" width="5" height="1" fill="#4a4f57"/><rect x="6.5" y="539.0" width="2" height="1" fill="#4a4f57"/><text transform="translate(10.5,549.0) rotate(-90)" font-size="10" fill="#4a4f57" text-anchor="middle" font-family="Liberation Sans" dy="0">12</text><rect x="6.5" y="558.0" width="2" height="1" fill="#4a4f57"/><rect x="5.0" y="567.5" width="5" height="1" fill="#4a4f57"/><rect x="6.5" y="577.0" width="2" height="1" fill="#4a4f57"/><text transform="translate(10.5,587.0) rotate(-90)" font-size="10" fill="#4a4f57" text-anchor="middle" font-family="Liberation Sans" dy="0">13</text><rect x="6.5" y="596.0" width="2" height="1" fill="#4a4f57"/><rect x="5.0" y="605.5" width="5" height="1" fill="#4a4f57"/><rect x="6.5" y="615.0" width="2" height="1" fill="#4a4f57"/><text transform="translate(10.5,625.0) rotate(-90)" font-size="10" fill="#4a4f57" text-anchor="middle" font-family="Liberation Sans" dy="0">14</text><rect x="6.5" y="634.0" width="2" height="1" fill="#4a4f57"/><text transform="translate(10.5,94.0) rotate(-90)" font-size="10" fill="#4a4f57" text-anchor="middle" font-family="Liberation Sans">0</text></svg>
<div style="position:absolute;left:327px;top:630.4px;width:15px;height:13.800000000000068px;background:#cbced3;border-left:1px solid #b4b8be;border-right:1px solid #b4b8be"></div>
<div style="position:absolute;left:327px;top:648px;width:15px;height:14.700000000000045px;background:#cbced3;border-left:1px solid #b4b8be;border-right:1px solid #b4b8be"></div>
<div style="position:absolute;left:327px;top:683.5px;width:15px;height:14.5px;background:#cbced3;border-left:1px solid #b4b8be;border-right:1px solid #b4b8be"></div>
<div style="position:absolute;left:327px;top:701.5px;width:15px;height:14.299999999999955px;background:#cbced3;border-left:1px solid #b4b8be;border-right:1px solid #b4b8be"></div>
<div style="position:absolute;left:327px;top:718px;width:15px;height:14.399999999999977px;background:#cbced3;border-left:1px solid #b4b8be;border-right:1px solid #b4b8be"></div>
<div style="position:absolute;left:327px;top:736px;width:15px;height:14.399999999999977px;background:#cbced3;border-left:1px solid #b4b8be;border-right:1px solid #b4b8be"></div>
<div style="position:absolute;left:327px;top:754px;width:15px;height:14.899999999999977px;background:#cbced3;border-left:1px solid #b4b8be;border-right:1px solid #b4b8be"></div>
<div style="position:absolute;left:327px;top:772px;width:15px;height:14.200000000000045px;background:#cbced3;border-left:1px solid #b4b8be;border-right:1px solid #b4b8be"></div>
<div style="position:absolute;left:327px;top:790px;width:15px;height:14.600000000000023px;background:#cbced3;border-left:1px solid #b4b8be;border-right:1px solid #b4b8be"></div>
<div style="position:absolute;left:327px;top:808px;width:15px;height:14.600000000000023px;background:#cbced3;border-left:1px solid #b4b8be;border-right:1px solid #b4b8be"></div>
<div style="position:absolute;left:327px;top:826px;width:15px;height:14.399999999999977px;background:#cbced3;border-left:1px solid #b4b8be;border-right:1px solid #b4b8be"></div>
<div style="position:absolute;left:347px;top:338px;width:21px;height:640px;background:linear-gradient(90deg,#d8dbdf,#cdd0d5 45%,#b9bcc1 80%,#a5a9ae)"></div>
<div style="position:absolute;left:369px;top:318px;width:792px;height:18px;background:linear-gradient(#e4e7eb,#dfe2e6 40%,#d0d3d7 75%,#c2c5c9)"></div>
<div style="position:absolute;left:347px;top:318px;width:22px;height:20px;background:radial-gradient(circle at 100% 100%,#b4b7bc 0,#cfd2d6 10px,rgba(228,231,235,0) 21px)"></div>
<div style="position:absolute;left:368px;top:336px;width:793px;height:642px;background:#fff;border-left:1px solid #909397;border-top:1px solid #95989b"></div>
<div style="position:absolute;top:431.26px;font-size:18px;line-height:22px;color:#000;white-space:nowrap;font-weight:700;letter-spacing:0.42px;left:766px;transform:translateX(-50%);">CONTRATO DE ARRENDAMIENTO DE VIVIENDA</div>
<div style="position:absolute;top:473.86px;font-size:13.4px;line-height:17px;color:#000;white-space:nowrap;font-weight:700;left:482px;">OBJETO DEL CONTRATO</div>
<div style="position:absolute;left:475px;top:490px;width:570px;height:1px;background:#000"></div>
<div style="position:absolute;left:475px;top:508px;width:570px;height:1px;background:#000"></div>
<div style="position:absolute;left:475px;top:526px;width:570px;height:1px;background:#000"></div>
<div style="position:absolute;left:475px;top:543px;width:570px;height:1px;background:#000"></div>
<div style="position:absolute;left:475px;top:561px;width:570px;height:1px;background:#000"></div>
<div style="position:absolute;left:475px;top:579px;width:570px;height:1px;background:#000"></div>
<div style="position:absolute;left:475px;top:490px;width:1px;height:90px;background:#000"></div>
<div style="position:absolute;left:1044px;top:490px;width:1px;height:90px;background:#000"></div>
<div style="position:absolute;left:703px;top:490px;width:1px;height:19px;background:#000"></div>
<div style="position:absolute;top:490.34px;font-size:14.6px;line-height:18px;color:#000;white-space:nowrap;left:482px;">Dirección</div>
<div style="position:absolute;left:710px;top:491px;width:143px;height:17px;background:#c8c8c8"></div>
<div style="position:absolute;top:490.34px;font-size:14.6px;line-height:18px;color:#000;white-space:nowrap;font-weight:700;left:711px;">Muntaner 230; 2º - 2ª</div>
<div style="position:absolute;left:703px;top:508px;width:1px;height:19px;background:#000"></div>
<div style="position:absolute;top:508.34px;font-size:14.6px;line-height:18px;color:#000;white-space:nowrap;left:482px;">Población</div>
<div style="position:absolute;left:710px;top:509px;width:72px;height:17px;background:#c8c8c8"></div>
<div style="position:absolute;top:508.34px;font-size:14.6px;line-height:18px;color:#000;white-space:nowrap;font-weight:700;left:711px;">Barcelona</div>
<div style="position:absolute;left:703px;top:526px;width:1px;height:18px;background:#000"></div>
<div style="position:absolute;top:526.34px;font-size:14.6px;line-height:18px;color:#000;white-space:nowrap;left:482px;">Referencia catastral</div>
<div style="position:absolute;left:710px;top:527px;width:172px;height:16px;background:#c8c8c8"></div>
<div style="position:absolute;top:526.34px;font-size:14.6px;line-height:18px;color:#000;white-space:nowrap;font-weight:700;left:711px;">2371415DF3827A0204SD</div>
<div style="position:absolute;left:703px;top:543px;width:1px;height:19px;background:#000"></div>
<div style="position:absolute;top:543.34px;font-size:14.6px;line-height:18px;color:#000;white-space:nowrap;left:482px;">Cedula de habitabilidad núm.</div>
<div style="position:absolute;left:710px;top:544px;width:128px;height:17px;background:#c8c8c8"></div>
<div style="position:absolute;top:543.34px;font-size:14.6px;line-height:18px;color:#000;white-space:nowrap;font-weight:700;left:711px;">15CH04592513001</div>
<div style="position:absolute;left:703px;top:561px;width:1px;height:19px;background:#000"></div>
<div style="position:absolute;top:561.34px;font-size:14.6px;line-height:18px;color:#000;white-space:nowrap;font-style:italic;left:482px;">Certificado eficiencia energética</div>
<div style="position:absolute;left:710px;top:562px;width:79px;height:17px;background:#c8c8c8"></div>
<div style="position:absolute;top:561.34px;font-size:14.6px;line-height:18px;color:#000;white-space:nowrap;font-weight:700;left:711px;">W0641HMJ</div>
<div style="position:absolute;top:594.86px;font-size:13.4px;line-height:17px;color:#000;white-space:nowrap;font-weight:700;left:482px;">DATOS DEL ARRENDADOR</div>
<div style="position:absolute;left:475px;top:611px;width:570px;height:1px;background:#000"></div>
<div style="position:absolute;left:475px;top:629px;width:570px;height:1px;background:#000"></div>
<div style="position:absolute;left:475px;top:647px;width:570px;height:1px;background:#000"></div>
<div style="position:absolute;left:475px;top:681px;width:570px;height:1px;background:#000"></div>
<div style="position:absolute;left:475px;top:699px;width:570px;height:1px;background:#000"></div>
<div style="position:absolute;left:475px;top:717px;width:570px;height:1px;background:#000"></div>
<div style="position:absolute;left:475px;top:735px;width:570px;height:1px;background:#000"></div>
<div style="position:absolute;left:475px;top:753px;width:570px;height:1px;background:#000"></div>
<div style="position:absolute;left:475px;top:771px;width:570px;height:1px;background:#000"></div>
<div style="position:absolute;left:475px;top:788px;width:570px;height:1px;background:#000"></div>
<div style="position:absolute;left:475px;top:806px;width:570px;height:1px;background:#000"></div>
<div style="position:absolute;left:475px;top:824px;width:570px;height:1px;background:#000"></div>
<div style="position:absolute;left:475px;top:611px;width:1px;height:214px;background:#000"></div>
<div style="position:absolute;left:1044px;top:611px;width:1px;height:214px;background:#000"></div>
<div style="position:absolute;left:703px;top:611px;width:1px;height:19px;background:#000"></div>
<div style="position:absolute;top:611.34px;font-size:14.6px;line-height:18px;color:#000;white-space:nowrap;left:482px;">Nombre completo o razón social</div>
<div style="position:absolute;left:710px;top:612px;width:207px;height:17px;background:#c8c8c8"></div>
<div style="position:absolute;top:611.34px;font-size:14.6px;line-height:18px;color:#000;white-space:nowrap;font-weight:700;left:711px;">Nombre completo arrendador</div>
<div style="position:absolute;left:703px;top:629px;width:1px;height:19px;background:#000"></div>
<div style="position:absolute;top:629.34px;font-size:14.6px;line-height:18px;color:#000;white-space:nowrap;left:482px;">NIF</div>
<div style="position:absolute;left:710px;top:630px;width:75px;height:17px;background:#c8c8c8"></div>
<div style="position:absolute;top:629.34px;font-size:14.6px;line-height:18px;color:#000;white-space:nowrap;font-weight:700;left:711px;">08641390Z</div>
<div style="position:absolute;left:703px;top:647px;width:1px;height:35px;background:#000"></div>
<div style="position:absolute;top:647.34px;font-size:14.6px;line-height:18px;color:#000;white-space:nowrap;left:482px;">Domicilio</div>
<div style="position:absolute;left:710px;top:648px;width:122px;height:17px;background:#c8c8c8"></div>
<div style="position:absolute;top:647.34px;font-size:14.6px;line-height:18px;color:#000;white-space:nowrap;font-weight:700;left:711px;">Bailén 20; 3º - 1ª </div>
<div style="position:absolute;left:710px;top:665px;width:116px;height:16px;background:#c8c8c8"></div>
<div style="position:absolute;top:664.34px;font-size:14.6px;line-height:18px;color:#000;white-space:nowrap;font-weight:700;left:711px;">08010 Barcelona</div>
<div style="position:absolute;left:703px;top:681px;width:1px;height:19px;background:#000"></div>
<div style="position:absolute;top:681.34px;font-size:14.6px;line-height:18px;color:#000;white-space:nowrap;left:482px;">Domicilio en línea</div>
<div style="position:absolute;left:710px;top:682px;width:242px;height:17px;background:#c8c8c8"></div>
<div style="position:absolute;top:681.34px;font-size:14.6px;line-height:18px;color:#000;white-space:nowrap;font-weight:700;left:711px;">Bailén 20; 3º - 1ª , 08010 Barcelona</div>
<div style="position:absolute;left:703px;top:699px;width:1px;height:19px;background:#000"></div>
<div style="position:absolute;top:699.34px;font-size:14.6px;line-height:18px;color:#000;white-space:nowrap;left:482px;">Titulo</div>
<div style="position:absolute;top:717.34px;font-size:14.6px;line-height:18px;color:#000;white-space:nowrap;font-style:italic;left:482px;">Representante</div>
<div style="position:absolute;left:703px;top:735px;width:1px;height:19px;background:#000"></div>
<div style="position:absolute;top:735.34px;font-size:14.6px;line-height:18px;color:#000;white-space:nowrap;left:482px;">Nombre</div>
<div style="position:absolute;left:703px;top:753px;width:1px;height:19px;background:#000"></div>
<div style="position:absolute;top:753.34px;font-size:14.6px;line-height:18px;color:#000;white-space:nowrap;left:482px;">Apellidos</div>
<div style="position:absolute;left:703px;top:771px;width:1px;height:18px;background:#000"></div>
<div style="position:absolute;top:771.34px;font-size:14.6px;line-height:18px;color:#000;white-space:nowrap;left:482px;">NIF</div>
<div style="position:absolute;left:703px;top:788px;width:1px;height:19px;background:#000"></div>
<div style="position:absolute;top:788.34px;font-size:14.6px;line-height:18px;color:#000;white-space:nowrap;left:482px;">Domicilio</div>
<div style="position:absolute;left:703px;top:806px;width:1px;height:19px;background:#000"></div>
<div style="position:absolute;top:806.34px;font-size:14.6px;line-height:18px;color:#000;white-space:nowrap;font-style:italic;left:482px;">Titulo</div>
<div style="position:absolute;top:838.86px;font-size:13.4px;line-height:17px;color:#000;white-space:nowrap;font-weight:700;left:482px;">DATOS DEL ARRENDATARIO</div>
<div style="position:absolute;left:475px;top:856px;width:570px;height:1px;background:#000"></div>
<div style="position:absolute;left:475px;top:874px;width:570px;height:1px;background:#000"></div>
<div style="position:absolute;left:475px;top:892px;width:570px;height:1px;background:#000"></div>
<div style="position:absolute;left:475px;top:926px;width:570px;height:1px;background:#000"></div>
<div style="position:absolute;left:475px;top:944px;width:570px;height:1px;background:#000"></div>
<div style="position:absolute;left:475px;top:962px;width:570px;height:1px;background:#000"></div>
<div style="position:absolute;left:475px;top:980px;width:570px;height:1px;background:#000"></div>
<div style="position:absolute;left:475px;top:856px;width:1px;height:125px;background:#000"></div>
<div style="position:absolute;left:1044px;top:856px;width:1px;height:125px;background:#000"></div>
<div style="position:absolute;left:703px;top:856px;width:1px;height:19px;background:#000"></div>
<div style="position:absolute;top:856.34px;font-size:14.6px;line-height:18px;color:#000;white-space:nowrap;left:482px;">Nombre completo o razón social</div>
<div style="position:absolute;left:710px;top:857px;width:191px;height:17px;background:#c8c8c8"></div>
<div style="position:absolute;top:856.34px;font-size:14.6px;line-height:18px;color:#000;white-space:nowrap;font-weight:700;left:711px;">Nombre completo inquilino</div>
<div style="position:absolute;left:703px;top:874px;width:1px;height:19px;background:#000"></div>
<div style="position:absolute;top:874.34px;font-size:14.6px;line-height:18px;color:#000;white-space:nowrap;left:482px;">NIF</div>
<div style="position:absolute;left:710px;top:875px;width:75px;height:17px;background:#c8c8c8"></div>
<div style="position:absolute;top:874.34px;font-size:14.6px;line-height:18px;color:#000;white-space:nowrap;font-weight:700;left:711px;">02068949F</div>
<div style="position:absolute;left:703px;top:892px;width:1px;height:35px;background:#000"></div>
<div style="position:absolute;top:892.34px;font-size:14.6px;line-height:18px;color:#000;white-space:nowrap;left:482px;">Domicilio</div>
<div style="position:absolute;left:710px;top:893px;width:144px;height:17px;background:#c8c8c8"></div>
<div style="position:absolute;top:892.34px;font-size:14.6px;line-height:18px;color:#000;white-space:nowrap;font-weight:700;left:711px;">Valencia 220; 1º - 1ª </div>
<div style="position:absolute;left:710px;top:910px;width:116px;height:16px;background:#c8c8c8"></div>
<div style="position:absolute;top:909.34px;font-size:14.6px;line-height:18px;color:#000;white-space:nowrap;font-weight:700;left:711px;">08004 Barcelona</div>
<div style="position:absolute;left:703px;top:926px;width:1px;height:19px;background:#000"></div>
<div style="position:absolute;top:926.34px;font-size:14.6px;line-height:18px;color:#000;white-space:nowrap;left:482px;">Titulo</div>
<div style="position:absolute;top:944.34px;font-size:14.6px;line-height:18px;color:#000;white-space:nowrap;font-style:italic;left:482px;">Representante</div>
<div style="position:absolute;left:703px;top:962px;width:1px;height:19px;background:#000"></div>
<div style="position:absolute;top:962.34px;font-size:14.6px;line-height:18px;color:#000;white-space:nowrap;left:482px;">Nombre</div>
<svg style="position:absolute;left:710px;top:505px" width="65" height="3" viewBox="0 0 65 3"><path d="M0 1.5 l1.5 -1.5 l1.5 1.5 l1.5 -1.5 l1.5 1.5 l1.5 -1.5 l1.5 1.5 l1.5 -1.5 l1.5 1.5 l1.5 -1.5 l1.5 1.5 l1.5 -1.5 l1.5 1.5 l1.5 -1.5 l1.5 1.5 l1.5 -1.5 l1.5 1.5 l1.5 -1.5 l1.5 1.5 l1.5 -1.5 l1.5 1.5 l1.5 -1.5 l1.5 1.5 l1.5 -1.5 l1.5 1.5 l1.5 -1.5 l1.5 1.5 l1.5 -1.5 l1.5 1.5 l1.5 -1.5 l1.5 1.5 l1.5 -1.5 l1.5 1.5 l1.5 -1.5 l1.5 1.5 l1.5 -1.5 l1.5 1.5 l1.5 -1.5 l1.5 1.5 l1.5 -1.5 l1.5 1.5 l1.5 -1.5 l1.5 1.5" fill="none" stroke="#d8141a" stroke-width="0.8"/></svg>
<svg style="position:absolute;left:482px;top:560px" width="47" height="3" viewBox="0 0 47 3"><path d="M0 1.5 l1.5 -1.5 l1.5 1.5 l1.5 -1.5 l1.5 1.5 l1.5 -1.5 l1.5 1.5 l1.5 -1.5 l1.5 1.5 l1.5 -1.5 l1.5 1.5 l1.5 -1.5 l1.5 1.5 l1.5 -1.5 l1.5 1.5 l1.5 -1.5 l1.5 1.5 l1.5 -1.5 l1.5 1.5 l1.5 -1.5 l1.5 1.5 l1.5 -1.5 l1.5 1.5 l1.5 -1.5 l1.5 1.5 l1.5 -1.5 l1.5 1.5 l1.5 -1.5 l1.5 1.5 l1.5 -1.5 l1.5 1.5" fill="none" stroke="#d8141a" stroke-width="0.8"/></svg>
<svg style="position:absolute;left:641px;top:560px" width="27" height="3" viewBox="0 0 27 3"><path d="M0 1.5 l1.5 -1.5 l1.5 1.5 l1.5 -1.5 l1.5 1.5 l1.5 -1.5 l1.5 1.5 l1.5 -1.5 l1.5 1.5 l1.5 -1.5 l1.5 1.5 l1.5 -1.5 l1.5 1.5 l1.5 -1.5 l1.5 1.5 l1.5 -1.5 l1.5 1.5 l1.5 -1.5 l1.5 1.5" fill="none" stroke="#d8141a" stroke-width="0.8"/></svg>
<svg style="position:absolute;left:710px;top:663px" width="42" height="3" viewBox="0 0 42 3"><path d="M0 1.5 l1.5 -1.5 l1.5 1.5 l1.5 -1.5 l1.5 1.5 l1.5 -1.5 l1.5 1.5 l1.5 -1.5 l1.5 1.5 l1.5 -1.5 l1.5 1.5 l1.5 -1.5 l1.5 1.5 l1.5 -1.5 l1.5 1.5 l1.5 -1.5 l1.5 1.5 l1.5 -1.5 l1.5 1.5 l1.5 -1.5 l1.5 1.5 l1.5 -1.5 l1.5 1.5 l1.5 -1.5 l1.5 1.5 l1.5 -1.5 l1.5 1.5 l1.5 -1.5 l1.5 1.5" fill="none" stroke="#d8141a" stroke-width="0.8"/></svg>
<svg style="position:absolute;left:710px;top:699px" width="42" height="3" viewBox="0 0 42 3"><path d="M0 1.5 l1.5 -1.5 l1.5 1.5 l1.5 -1.5 l1.5 1.5 l1.5 -1.5 l1.5 1.5 l1.5 -1.5 l1.5 1.5 l1.5 -1.5 l1.5 1.5 l1.5 -1.5 l1.5 1.5 l1.5 -1.5 l1.5 1.5 l1.5 -1.5 l1.5 1.5 l1.5 -1.5 l1.5 1.5 l1.5 -1.5 l1.5 1.5 l1.5 -1.5 l1.5 1.5 l1.5 -1.5 l1.5 1.5 l1.5 -1.5 l1.5 1.5 l1.5 -1.5 l1.5 1.5" fill="none" stroke="#d8141a" stroke-width="0.8"/></svg>
<div style="position:absolute;left:475px;top:680px;width:486px;height:20px;border:2px solid #f5070f"></div>
<div style="position:absolute;left:1161px;top:287px;width:17px;height:691px;background:linear-gradient(90deg,#f0f1f2,#fdfdfd)"></div>
<svg style="position:absolute;left:1161px;top:290px" width="17" height="12" viewBox="0 0 17 12"><path d="M3.5 9h10L8.5 4z" fill="#555a60"/></svg>
<div style="position:absolute;left:1162px;top:304px;width:15px;height:53px;background:linear-gradient(90deg,#f6f6f7,#e4e5e7);border:1px solid #b9bdc2;border-radius:2px"></div>
<svg style="position:absolute;left:1166px;top:326px" width="9" height="8" viewBox="0 0 9 8"><rect x="0" y="0" width="8" height="1" fill="#5a5f65"/><rect x="0" y="2" width="8" height="1" fill="#5a5f65"/><rect x="0" y="4" width="8" height="1" fill="#5a5f65"/><rect x="0" y="6" width="8" height="1" fill="#5a5f65"/></svg>
<svg style="position:absolute;left:1161px;top:962px" width="17" height="12" viewBox="0 0 17 12"><path d="M3.5 4h10L8.5 9z" fill="#555a60"/></svg>
<div style="position:absolute;left:1161px;top:978px;width:17px;height:17px;background:#e6e9ed"></div>
<div style="position:absolute;left:321px;top:978px;width:840px;height:17px;background:linear-gradient(#f1f2f3,#fdfdfd)"></div>
<svg style="position:absolute;left:324px;top:980px" width="12" height="13" viewBox="0 0 12 13"><path d="M9 2v10L3.5 7z" fill="#555a60"/></svg>
<div style="position:absolute;left:339px;top:979px;width:782px;height:15px;background:linear-gradient(#f4f4f5,#e6e7e9);border:1px solid #b9bdc2;border-radius:2px"></div>
<svg style="position:absolute;left:726px;top:982px" width="9" height="9" viewBox="0 0 9 9"><rect x="0" y="1" width="1" height="7" fill="#5a5f65"/><rect x="2" y="1" width="1" height="7" fill="#5a5f65"/><rect x="4" y="1" width="1" height="7" fill="#5a5f65"/><rect x="6" y="1" width="1" height="7" fill="#5a5f65"/></svg>
<svg style="position:absolute;left:1146px;top:980px" width="12" height="13" viewBox="0 0 12 13"><path d="M3 2v10L8.5 7z" fill="#555a60"/></svg>
<div style="position:absolute;left:1181px;top:288px;width:399px;height:587px;background:#e8ebef;border:1px solid #9aa1a9;border-radius:3px 3px 0 0"></div>
<div style="position:absolute;left:1582px;top:283px;width:1px;height:712px;background:#8f959c"></div>
<div style="position:absolute;top:292.19px;font-size:11px;line-height:14px;color:#5e6a88;white-space:nowrap;letter-spacing:-0.41px;left:1186.5px;">Lista de Campos</div>
<svg style="position:absolute;left:1524px;top:292px" width="54" height="14" viewBox="0 0 54 14"><path d="M2.1 4.1h8.8v6.8H2.1z M3.9 5.9v3.2h5.2V5.9z" fill="#4b5058" fill-rule="evenodd"/><path d="M23 2.9h5.2V9H23z M24.1 3.9V8h2.1V3.9z" fill="#4b5058" fill-rule="evenodd"/><rect x="22" y="8" width="7" height="1.2" fill="#4b5058"/><rect x="25.2" y="9" width="1" height="3.3" fill="#4b5058"/><path d="M40.8 4.5L48.6 10.6M48.6 4.5L40.8 10.6" stroke="#4b5058" stroke-width="2.1"/></svg>
<div style="position:absolute;left:1183px;top:311px;width:378px;height:563px;background:#fff;border:1px solid #aab0b7;border-right:none"></div>
<div style="position:absolute;left:1561px;top:311px;width:17px;height:563px;background:linear-gradient(90deg,#f0f1f2,#fdfdfd);border-top:1px solid #aab0b7;border-bottom:1px solid #aab0b7"></div>
<svg style="position:absolute;left:1561px;top:315px" width="17" height="12" viewBox="0 0 17 12"><path d="M3.5 9h10L8.5 4z" fill="#555a60"/></svg>
<div style="position:absolute;left:1562px;top:329px;width:15px;height:465px;background:linear-gradient(90deg,#f6f6f7,#e4e5e7);border:1px solid #b9bdc2;border-radius:2px"></div>
<svg style="position:absolute;left:1566px;top:565px" width="9" height="8" viewBox="0 0 9 8"><rect x="0" y="0" width="8" height="1" fill="#5a5f65"/><rect x="0" y="2" width="8" height="1" fill="#5a5f65"/><rect x="0" y="4" width="8" height="1" fill="#5a5f65"/><rect x="0" y="6" width="8" height="1" fill="#5a5f65"/></svg>
<svg style="position:absolute;left:1561px;top:857px" width="17" height="12" viewBox="0 0 17 12"><path d="M3.5 4h10L8.5 9z" fill="#555a60"/></svg>
<div style="position:absolute;left:1577px;top:311px;width:1px;height:563px;background:#aab0b7"></div>
<svg style="position:absolute;left:1187px;top:316px" width="12" height="10" viewBox="0 0 12 10"><path d="M2 3l4 4 4-4" fill="none" stroke="#6b7078" stroke-width="1.6"/></svg>
<svg style="position:absolute;left:1203px;top:313px" width="16" height="15" viewBox="0 0 16 15"><rect x="0.5" y="0.5" width="15" height="14" fill="#fff" stroke="#3e4349"/><rect x="5" y="3.5" width="6" height="8" rx="1.5" fill="#ff9e0d"/><ellipse cx="8" cy="4" rx="3" ry="1.2" fill="#ffc060"/></svg>
<div style="position:absolute;top:314.19px;font-size:11px;line-height:14px;color:#000;white-space:nowrap;letter-spacing:-0.204px;left:1223px;">PlantillaContratoAlquilerEL</div>
<svg style="position:absolute;left:1205px;top:334px" width="12" height="10" viewBox="0 0 12 10"><path d="M2 3l4 4 4-4" fill="none" stroke="#6b7078" stroke-width="1.6"/></svg>
<svg style="position:absolute;left:1222px;top:333px" width="15" height="13" viewBox="0 0 15 13"><rect x="0" y="0" width="14" height="3" fill="#38a852"/><rect x="0" y="5" width="4" height="3" fill="#a8acb1"/><rect x="0" y="9" width="4" height="3" fill="#a8acb1"/><rect x="5" y="5" width="4" height="3" fill="#a8acb1"/><rect x="5" y="9" width="4" height="3" fill="#a8acb1"/><rect x="10" y="5" width="4" height="3" fill="#a8acb1"/><rect x="10" y="9" width="4" height="3" fill="#a8acb1"/></svg>
<div style="position:absolute;top:332.19px;font-size:11px;line-height:14px;color:#000;white-space:nowrap;letter-spacing:-0.604px;left:1241px;">CONTRATO_ALQUILER</div>
<svg style="position:absolute;left:1239px;top:350px" width="16" height="14" viewBox="0 0 16 14"><rect x="0.75" y="1" width="14.5" height="12.2" fill="#fff" stroke="#5f646b" stroke-width="1.5"/><rect x="0" y="0" width="16" height="3" fill="#38a852"/><ellipse cx="4.6" cy="8.6" rx="1.9" ry="2.2" fill="none" stroke="#4a7fd9" stroke-width="1.1"/><path d="M6.5 6.2v4.3l0.9 0.4M8.8 4v6.8" fill="none" stroke="#4a7fd9" stroke-width="1.1"/><ellipse cx="10.9" cy="8.6" rx="1.9" ry="2.2" fill="none" stroke="#4a7fd9" stroke-width="1.1"/></svg>
<div style="position:absolute;top:350.19px;font-size:11px;line-height:14px;color:#000;white-space:nowrap;letter-spacing:-0.56px;left:1259.5px;">ARRENDADOR_DOMICILIO</div>
<div style="position:absolute;left:1235px;top:366px;width:325px;height:17px;background:#ebecef"></div>
<svg style="position:absolute;left:1239px;top:368px" width="16" height="14" viewBox="0 0 16 14"><rect x="0.75" y="1" width="14.5" height="12.2" fill="#fff" stroke="#5f646b" stroke-width="1.5"/><rect x="0" y="0" width="16" height="3" fill="#38a852"/><ellipse cx="4.6" cy="8.6" rx="1.9" ry="2.2" fill="none" stroke="#4a7fd9" stroke-width="1.1"/><path d="M6.5 6.2v4.3l0.9 0.4M8.8 4v6.8" fill="none" stroke="#4a7fd9" stroke-width="1.1"/><ellipse cx="10.9" cy="8.6" rx="1.9" ry="2.2" fill="none" stroke="#4a7fd9" stroke-width="1.1"/></svg>
<div style="position:absolute;top:368.19px;font-size:11px;line-height:14px;color:#000;white-space:nowrap;letter-spacing:-0.552px;left:1259.5px;">ARRENDADOR_DOMICILIO_EN_LINEA</div>
<svg style="position:absolute;left:1239px;top:386px" width="16" height="14" viewBox="0 0 16 14"><rect x="0.75" y="1" width="14.5" height="12.2" fill="#fff" stroke="#5f646b" stroke-width="1.5"/><rect x="0" y="0" width="16" height="3" fill="#38a852"/><ellipse cx="4.6" cy="8.6" rx="1.9" ry="2.2" fill="none" stroke="#4a7fd9" stroke-width="1.1"/><path d="M6.5 6.2v4.3l0.9 0.4M8.8 4v6.8" fill="none" stroke="#4a7fd9" stroke-width="1.1"/><ellipse cx="10.9" cy="8.6" rx="1.9" ry="2.2" fill="none" stroke="#4a7fd9" stroke-width="1.1"/></svg>
<div style="position:absolute;top:386.19px;font-size:11px;line-height:14px;color:#000;white-space:nowrap;letter-spacing:-0.613px;left:1259.5px;">ARRENDADOR_NIF</div>
<svg style="position:absolute;left:1239px;top:404px" width="16" height="14" viewBox="0 0 16 14"><rect x="0.75" y="1" width="14.5" height="12.2" fill="#fff" stroke="#5f646b" stroke-width="1.5"/><rect x="0" y="0" width="16" height="3" fill="#38a852"/><ellipse cx="4.6" cy="8.6" rx="1.9" ry="2.2" fill="none" stroke="#4a7fd9" stroke-width="1.1"/><path d="M6.5 6.2v4.3l0.9 0.4M8.8 4v6.8" fill="none" stroke="#4a7fd9" stroke-width="1.1"/><ellipse cx="10.9" cy="8.6" rx="1.9" ry="2.2" fill="none" stroke="#4a7fd9" stroke-width="1.1"/></svg>
<div style="position:absolute;top:404.19px;font-size:11px;line-height:14px;color:#000;white-space:nowrap;letter-spacing:-0.69px;left:1259.5px;">ARRENDADOR_NOMBRE</div>
<svg style="position:absolute;left:1239px;top:422px" width="16" height="14" viewBox="0 0 16 14"><rect x="0.75" y="1" width="14.5" height="12.2" fill="#fff" stroke="#5f646b" stroke-width="1.5"/><rect x="0" y="0" width="16" height="3" fill="#38a852"/><ellipse cx="4.6" cy="8.6" rx="1.9" ry="2.2" fill="none" stroke="#4a7fd9" stroke-width="1.1"/><path d="M6.5 6.2v4.3l0.9 0.4M8.8 4v6.8" fill="none" stroke="#4a7fd9" stroke-width="1.1"/><ellipse cx="10.9" cy="8.6" rx="1.9" ry="2.2" fill="none" stroke="#4a7fd9" stroke-width="1.1"/></svg>
<div style="position:absolute;top:422.19px;font-size:11px;line-height:14px;color:#000;white-space:nowrap;letter-spacing:-0.617px;left:1259.5px;">CONTRATO_DURACION_ANNOS_MESES_DIAS</div>
<svg style="position:absolute;left:1239px;top:440px" width="16" height="14" viewBox="0 0 16 14"><rect x="0.75" y="1" width="14.5" height="12.2" fill="#fff" stroke="#5f646b" stroke-width="1.5"/><rect x="0" y="0" width="16" height="3" fill="#38a852"/><ellipse cx="4.6" cy="8.6" rx="1.9" ry="2.2" fill="none" stroke="#4a7fd9" stroke-width="1.1"/><path d="M6.5 6.2v4.3l0.9 0.4M8.8 4v6.8" fill="none" stroke="#4a7fd9" stroke-width="1.1"/><ellipse cx="10.9" cy="8.6" rx="1.9" ry="2.2" fill="none" stroke="#4a7fd9" stroke-width="1.1"/></svg>
<div style="position:absolute;top:440.19px;font-size:11px;line-height:14px;color:#000;white-space:nowrap;letter-spacing:-0.613px;left:1259.5px;">CONTRATO_FECHA_FIN_CORTA</div>
<svg style="position:absolute;left:1239px;top:458px" width="16" height="14" viewBox="0 0 16 14"><rect x="0.75" y="1" width="14.5" height="12.2" fill="#fff" stroke="#5f646b" stroke-width="1.5"/><rect x="0" y="0" width="16" height="3" fill="#38a852"/><ellipse cx="4.6" cy="8.6" rx="1.9" ry="2.2" fill="none" stroke="#4a7fd9" stroke-width="1.1"/><path d="M6.5 6.2v4.3l0.9 0.4M8.8 4v6.8" fill="none" stroke="#4a7fd9" stroke-width="1.1"/><ellipse cx="10.9" cy="8.6" rx="1.9" ry="2.2" fill="none" stroke="#4a7fd9" stroke-width="1.1"/></svg>
<div style="position:absolute;top:458.19px;font-size:11px;line-height:14px;color:#000;white-space:nowrap;letter-spacing:-0.613px;left:1259.5px;">CONTRATO_FECHA_FIN_LARGA</div>
<svg style="position:absolute;left:1239px;top:476px" width="16" height="14" viewBox="0 0 16 14"><rect x="0.75" y="1" width="14.5" height="12.2" fill="#fff" stroke="#5f646b" stroke-width="1.5"/><rect x="0" y="0" width="16" height="3" fill="#38a852"/><ellipse cx="4.6" cy="8.6" rx="1.9" ry="2.2" fill="none" stroke="#4a7fd9" stroke-width="1.1"/><path d="M6.5 6.2v4.3l0.9 0.4M8.8 4v6.8" fill="none" stroke="#4a7fd9" stroke-width="1.1"/><ellipse cx="10.9" cy="8.6" rx="1.9" ry="2.2" fill="none" stroke="#4a7fd9" stroke-width="1.1"/></svg>
<div style="position:absolute;top:476.19px;font-size:11px;line-height:14px;color:#000;white-space:nowrap;letter-spacing:-0.565px;left:1259.5px;">CONTRATO_FECHA_INICIO_CORTA</div>
<svg style="position:absolute;left:1239px;top:494px" width="16" height="14" viewBox="0 0 16 14"><rect x="0.75" y="1" width="14.5" height="12.2" fill="#fff" stroke="#5f646b" stroke-width="1.5"/><rect x="0" y="0" width="16" height="3" fill="#38a852"/><ellipse cx="4.6" cy="8.6" rx="1.9" ry="2.2" fill="none" stroke="#4a7fd9" stroke-width="1.1"/><path d="M6.5 6.2v4.3l0.9 0.4M8.8 4v6.8" fill="none" stroke="#4a7fd9" stroke-width="1.1"/><ellipse cx="10.9" cy="8.6" rx="1.9" ry="2.2" fill="none" stroke="#4a7fd9" stroke-width="1.1"/></svg>
<div style="position:absolute;top:494.19px;font-size:11px;line-height:14px;color:#000;white-space:nowrap;letter-spacing:-0.564px;left:1259.5px;">CONTRATO_FECHA_INICIO_LARGA</div>
<svg style="position:absolute;left:1239px;top:512px" width="16" height="14" viewBox="0 0 16 14"><rect x="0.75" y="1" width="14.5" height="12.2" fill="#fff" stroke="#5f646b" stroke-width="1.5"/><rect x="0" y="0" width="16" height="3" fill="#38a852"/><ellipse cx="4.6" cy="8.6" rx="1.9" ry="2.2" fill="none" stroke="#4a7fd9" stroke-width="1.1"/><path d="M6.5 6.2v4.3l0.9 0.4M8.8 4v6.8" fill="none" stroke="#4a7fd9" stroke-width="1.1"/><ellipse cx="10.9" cy="8.6" rx="1.9" ry="2.2" fill="none" stroke="#4a7fd9" stroke-width="1.1"/></svg>
<div style="position:absolute;top:512.19px;font-size:11px;line-height:14px;color:#000;white-space:nowrap;letter-spacing:-0.667px;left:1259.5px;">CONTRATO_FORMA_PAGO_NUMERO_CUENTA</div>
<svg style="position:absolute;left:1239px;top:530px" width="16" height="14" viewBox="0 0 16 14"><rect x="0.75" y="1" width="14.5" height="12.2" fill="#fff" stroke="#5f646b" stroke-width="1.5"/><rect x="0" y="0" width="16" height="3" fill="#38a852"/><text x="8" y="11" font-size="8.5" fill="#4a7fd9" text-anchor="middle" font-family="Liberation Sans" font-weight="700" letter-spacing="-0.6">1,2</text></svg>
<div style="position:absolute;top:530.19px;font-size:11px;line-height:14px;color:#000;white-space:nowrap;letter-spacing:-0.584px;left:1259.5px;">CONTRATO_IMPORTE_FIANZA</div>
<svg style="position:absolute;left:1239px;top:548px" width="16" height="14" viewBox="0 0 16 14"><rect x="0.75" y="1" width="14.5" height="12.2" fill="#fff" stroke="#5f646b" stroke-width="1.5"/><rect x="0" y="0" width="16" height="3" fill="#38a852"/><text x="8" y="11" font-size="8.5" fill="#4a7fd9" text-anchor="middle" font-family="Liberation Sans" font-weight="700" letter-spacing="-0.6">1,2</text></svg>
<div style="position:absolute;top:548.19px;font-size:11px;line-height:14px;color:#000;white-space:nowrap;letter-spacing:-0.596px;left:1259.5px;">CONTRATO_IMPORTE_RECIBO</div>
<svg style="position:absolute;left:1239px;top:566px" width="16" height="14" viewBox="0 0 16 14"><rect x="0.75" y="1" width="14.5" height="12.2" fill="#fff" stroke="#5f646b" stroke-width="1.5"/><rect x="0" y="0" width="16" height="3" fill="#38a852"/><ellipse cx="4.6" cy="8.6" rx="1.9" ry="2.2" fill="none" stroke="#4a7fd9" stroke-width="1.1"/><path d="M6.5 6.2v4.3l0.9 0.4M8.8 4v6.8" fill="none" stroke="#4a7fd9" stroke-width="1.1"/><ellipse cx="10.9" cy="8.6" rx="1.9" ry="2.2" fill="none" stroke="#4a7fd9" stroke-width="1.1"/></svg>
<div style="position:absolute;top:566.19px;font-size:11px;line-height:14px;color:#000;white-space:nowrap;letter-spacing:-0.668px;left:1259.5px;">CONTRATO_MES</div>
<svg style="position:absolute;left:1239px;top:584px" width="16" height="14" viewBox="0 0 16 14"><rect x="0.75" y="1" width="14.5" height="12.2" fill="#fff" stroke="#5f646b" stroke-width="1.5"/><rect x="0" y="0" width="16" height="3" fill="#38a852"/><ellipse cx="4.6" cy="8.6" rx="1.9" ry="2.2" fill="none" stroke="#4a7fd9" stroke-width="1.1"/><path d="M6.5 6.2v4.3l0.9 0.4M8.8 4v6.8" fill="none" stroke="#4a7fd9" stroke-width="1.1"/><ellipse cx="10.9" cy="8.6" rx="1.9" ry="2.2" fill="none" stroke="#4a7fd9" stroke-width="1.1"/></svg>
<div style="position:absolute;top:584.19px;font-size:11px;line-height:14px;color:#000;white-space:nowrap;letter-spacing:-0.571px;left:1259.5px;">DEPARTAMENTO_CEDULA_HABITABILIDAD</div>
<svg style="position:absolute;left:1239px;top:602px" width="16" height="14" viewBox="0 0 16 14"><rect x="0.75" y="1" width="14.5" height="12.2" fill="#fff" stroke="#5f646b" stroke-width="1.5"/><rect x="0" y="0" width="16" height="3" fill="#38a852"/><ellipse cx="4.6" cy="8.6" rx="1.9" ry="2.2" fill="none" stroke="#4a7fd9" stroke-width="1.1"/><path d="M6.5 6.2v4.3l0.9 0.4M8.8 4v6.8" fill="none" stroke="#4a7fd9" stroke-width="1.1"/><ellipse cx="10.9" cy="8.6" rx="1.9" ry="2.2" fill="none" stroke="#4a7fd9" stroke-width="1.1"/></svg>
<div style="position:absolute;top:602.19px;font-size:11px;line-height:14px;color:#000;white-space:nowrap;letter-spacing:-0.591px;left:1259.5px;">DEPARTAMENTO_CERTIFICADO_ENERGETICO</div>
<svg style="position:absolute;left:1239px;top:620px" width="16" height="14" viewBox="0 0 16 14"><rect x="0.75" y="1" width="14.5" height="12.2" fill="#fff" stroke="#5f646b" stroke-width="1.5"/><rect x="0" y="0" width="16" height="3" fill="#38a852"/><ellipse cx="4.6" cy="8.6" rx="1.9" ry="2.2" fill="none" stroke="#4a7fd9" stroke-width="1.1"/><path d="M6.5 6.2v4.3l0.9 0.4M8.8 4v6.8" fill="none" stroke="#4a7fd9" stroke-width="1.1"/><ellipse cx="10.9" cy="8.6" rx="1.9" ry="2.2" fill="none" stroke="#4a7fd9" stroke-width="1.1"/></svg>
<div style="position:absolute;top:620.19px;font-size:11px;line-height:14px;color:#000;white-space:nowrap;letter-spacing:-0.649px;left:1259.5px;">DEPARTAMENTO_COD_POSTAL</div>
<svg style="position:absolute;left:1239px;top:638px" width="16" height="14" viewBox="0 0 16 14"><rect x="0.75" y="1" width="14.5" height="12.2" fill="#fff" stroke="#5f646b" stroke-width="1.5"/><rect x="0" y="0" width="16" height="3" fill="#38a852"/><ellipse cx="4.6" cy="8.6" rx="1.9" ry="2.2" fill="none" stroke="#4a7fd9" stroke-width="1.1"/><path d="M6.5 6.2v4.3l0.9 0.4M8.8 4v6.8" fill="none" stroke="#4a7fd9" stroke-width="1.1"/><ellipse cx="10.9" cy="8.6" rx="1.9" ry="2.2" fill="none" stroke="#4a7fd9" stroke-width="1.1"/></svg>
<div style="position:absolute;top:638.19px;font-size:11px;line-height:14px;color:#000;white-space:nowrap;letter-spacing:-0.608px;left:1259.5px;">DEPARTAMENTO_DIRECCION_COMPLETA</div>
<svg style="position:absolute;left:1239px;top:656px" width="16" height="14" viewBox="0 0 16 14"><rect x="0.75" y="1" width="14.5" height="12.2" fill="#fff" stroke="#5f646b" stroke-width="1.5"/><rect x="0" y="0" width="16" height="3" fill="#38a852"/><ellipse cx="4.6" cy="8.6" rx="1.9" ry="2.2" fill="none" stroke="#4a7fd9" stroke-width="1.1"/><path d="M6.5 6.2v4.3l0.9 0.4M8.8 4v6.8" fill="none" stroke="#4a7fd9" stroke-width="1.1"/><ellipse cx="10.9" cy="8.6" rx="1.9" ry="2.2" fill="none" stroke="#4a7fd9" stroke-width="1.1"/></svg>
<div style="position:absolute;top:656.19px;font-size:11px;line-height:14px;color:#000;white-space:nowrap;letter-spacing:-0.623px;left:1259.5px;">DEPARTAMENTO_POBLACION</div>
<svg style="position:absolute;left:1239px;top:674px" width="16" height="14" viewBox="0 0 16 14"><rect x="0.75" y="1" width="14.5" height="12.2" fill="#fff" stroke="#5f646b" stroke-width="1.5"/><rect x="0" y="0" width="16" height="3" fill="#38a852"/><ellipse cx="4.6" cy="8.6" rx="1.9" ry="2.2" fill="none" stroke="#4a7fd9" stroke-width="1.1"/><path d="M6.5 6.2v4.3l0.9 0.4M8.8 4v6.8" fill="none" stroke="#4a7fd9" stroke-width="1.1"/><ellipse cx="10.9" cy="8.6" rx="1.9" ry="2.2" fill="none" stroke="#4a7fd9" stroke-width="1.1"/></svg>
<div style="position:absolute;top:674.19px;font-size:11px;line-height:14px;color:#000;white-space:nowrap;letter-spacing:-0.588px;left:1259.5px;">DEPARTAMENTO_PROVINCIA</div>
<svg style="position:absolute;left:1239px;top:692px" width="16" height="14" viewBox="0 0 16 14"><rect x="0.75" y="1" width="14.5" height="12.2" fill="#fff" stroke="#5f646b" stroke-width="1.5"/><rect x="0" y="0" width="16" height="3" fill="#38a852"/><ellipse cx="4.6" cy="8.6" rx="1.9" ry="2.2" fill="none" stroke="#4a7fd9" stroke-width="1.1"/><path d="M6.5 6.2v4.3l0.9 0.4M8.8 4v6.8" fill="none" stroke="#4a7fd9" stroke-width="1.1"/><ellipse cx="10.9" cy="8.6" rx="1.9" ry="2.2" fill="none" stroke="#4a7fd9" stroke-width="1.1"/></svg>
<div style="position:absolute;top:692.19px;font-size:11px;line-height:14px;color:#000;white-space:nowrap;letter-spacing:-0.619px;left:1259.5px;">DEPARTAMENTO_REFERENCIA_CATASTRAL</div>
<svg style="position:absolute;left:1239px;top:710px" width="16" height="14" viewBox="0 0 16 14"><rect x="0.75" y="1" width="14.5" height="12.2" fill="#fff" stroke="#5f646b" stroke-width="1.5"/><rect x="0" y="0" width="16" height="3" fill="#38a852"/><ellipse cx="4.6" cy="8.6" rx="1.9" ry="2.2" fill="none" stroke="#4a7fd9" stroke-width="1.1"/><path d="M6.5 6.2v4.3l0.9 0.4M8.8 4v6.8" fill="none" stroke="#4a7fd9" stroke-width="1.1"/><ellipse cx="10.9" cy="8.6" rx="1.9" ry="2.2" fill="none" stroke="#4a7fd9" stroke-width="1.1"/></svg>
<div style="position:absolute;top:710.19px;font-size:11px;line-height:14px;color:#000;white-space:nowrap;letter-spacing:-0.639px;left:1259.5px;">FECHA_ACTUAL</div>
<svg style="position:absolute;left:1239px;top:728px" width="16" height="14" viewBox="0 0 16 14"><rect x="0.75" y="1" width="14.5" height="12.2" fill="#fff" stroke="#5f646b" stroke-width="1.5"/><rect x="0" y="0" width="16" height="3" fill="#38a852"/><text x="8" y="11" font-size="8.5" fill="#4a7fd9" text-anchor="middle" font-family="Liberation Sans" font-weight="700" letter-spacing="-0.6">12</text></svg>
<div style="position:absolute;top:728.19px;font-size:11px;line-height:14px;color:#000;white-space:nowrap;letter-spacing:-0.567px;left:1259.5px;">ID_CONTRATO_ALQUILER</div>
<svg style="position:absolute;left:1239px;top:746px" width="16" height="14" viewBox="0 0 16 14"><rect x="0.75" y="1" width="14.5" height="12.2" fill="#fff" stroke="#5f646b" stroke-width="1.5"/><rect x="0" y="0" width="16" height="3" fill="#38a852"/><ellipse cx="4.6" cy="8.6" rx="1.9" ry="2.2" fill="none" stroke="#4a7fd9" stroke-width="1.1"/><path d="M6.5 6.2v4.3l0.9 0.4M8.8 4v6.8" fill="none" stroke="#4a7fd9" stroke-width="1.1"/><ellipse cx="10.9" cy="8.6" rx="1.9" ry="2.2" fill="none" stroke="#4a7fd9" stroke-width="1.1"/></svg>
<div style="position:absolute;top:746.19px;font-size:11px;line-height:14px;color:#000;white-space:nowrap;letter-spacing:-0.436px;left:1259.5px;">INQUILINO_PRINCIPAL_DOMICILIO</div>
<svg style="position:absolute;left:1239px;top:764px" width="16" height="14" viewBox="0 0 16 14"><rect x="0.75" y="1" width="14.5" height="12.2" fill="#fff" stroke="#5f646b" stroke-width="1.5"/><rect x="0" y="0" width="16" height="3" fill="#38a852"/><ellipse cx="4.6" cy="8.6" rx="1.9" ry="2.2" fill="none" stroke="#4a7fd9" stroke-width="1.1"/><path d="M6.5 6.2v4.3l0.9 0.4M8.8 4v6.8" fill="none" stroke="#4a7fd9" stroke-width="1.1"/><ellipse cx="10.9" cy="8.6" rx="1.9" ry="2.2" fill="none" stroke="#4a7fd9" stroke-width="1.1"/></svg>
<div style="position:absolute;top:764.19px;font-size:11px;line-height:14px;color:#000;white-space:nowrap;letter-spacing:-0.459px;left:1259.5px;">INQUILINO_PRINCIPAL_DOMICILIO_EN_LINEA</div>
<svg style="position:absolute;left:1239px;top:782px" width="16" height="14" viewBox="0 0 16 14"><rect x="0.75" y="1" width="14.5" height="12.2" fill="#fff" stroke="#5f646b" stroke-width="1.5"/><rect x="0" y="0" width="16" height="3" fill="#38a852"/><ellipse cx="4.6" cy="8.6" rx="1.9" ry="2.2" fill="none" stroke="#4a7fd9" stroke-width="1.1"/><path d="M6.5 6.2v4.3l0.9 0.4M8.8 4v6.8" fill="none" stroke="#4a7fd9" stroke-width="1.1"/><ellipse cx="10.9" cy="8.6" rx="1.9" ry="2.2" fill="none" stroke="#4a7fd9" stroke-width="1.1"/></svg>
<div style="position:absolute;top:782.19px;font-size:11px;line-height:14px;color:#000;white-space:nowrap;letter-spacing:-0.436px;left:1259.5px;">INQUILINO_PRINCIPAL_NIF</div>
<svg style="position:absolute;left:1239px;top:800px" width="16" height="14" viewBox="0 0 16 14"><rect x="0.75" y="1" width="14.5" height="12.2" fill="#fff" stroke="#5f646b" stroke-width="1.5"/><rect x="0" y="0" width="16" height="3" fill="#38a852"/><ellipse cx="4.6" cy="8.6" rx="1.9" ry="2.2" fill="none" stroke="#4a7fd9" stroke-width="1.1"/><path d="M6.5 6.2v4.3l0.9 0.4M8.8 4v6.8" fill="none" stroke="#4a7fd9" stroke-width="1.1"/><ellipse cx="10.9" cy="8.6" rx="1.9" ry="2.2" fill="none" stroke="#4a7fd9" stroke-width="1.1"/></svg>
<div style="position:absolute;top:800.19px;font-size:11px;line-height:14px;color:#000;white-space:nowrap;letter-spacing:-0.507px;left:1259.5px;">INQUILINO_PRINCIPAL_NOMBRE</div>
<svg style="position:absolute;left:1239px;top:818px" width="16" height="14" viewBox="0 0 16 14"><rect x="0.75" y="1" width="14.5" height="12.2" fill="#fff" stroke="#5f646b" stroke-width="1.5"/><rect x="0" y="0" width="16" height="3" fill="#38a852"/><ellipse cx="4.6" cy="8.6" rx="1.9" ry="2.2" fill="none" stroke="#4a7fd9" stroke-width="1.1"/><path d="M6.5 6.2v4.3l0.9 0.4M8.8 4v6.8" fill="none" stroke="#4a7fd9" stroke-width="1.1"/><ellipse cx="10.9" cy="8.6" rx="1.9" ry="2.2" fill="none" stroke="#4a7fd9" stroke-width="1.1"/></svg>
<div style="position:absolute;top:818.19px;font-size:11px;line-height:14px;color:#000;white-space:nowrap;letter-spacing:-0.496px;left:1259.5px;">SEGUNDO_INQUILINO_DOMICILIO</div>
<svg style="position:absolute;left:1239px;top:836px" width="16" height="14" viewBox="0 0 16 14"><rect x="0.75" y="1" width="14.5" height="12.2" fill="#fff" stroke="#5f646b" stroke-width="1.5"/><rect x="0" y="0" width="16" height="3" fill="#38a852"/><ellipse cx="4.6" cy="8.6" rx="1.9" ry="2.2" fill="none" stroke="#4a7fd9" stroke-width="1.1"/><path d="M6.5 6.2v4.3l0.9 0.4M8.8 4v6.8" fill="none" stroke="#4a7fd9" stroke-width="1.1"/><ellipse cx="10.9" cy="8.6" rx="1.9" ry="2.2" fill="none" stroke="#4a7fd9" stroke-width="1.1"/></svg>
<div style="position:absolute;top:836.19px;font-size:11px;line-height:14px;color:#000;white-space:nowrap;letter-spacing:-0.506px;left:1259.5px;">SEGUNDO_INQUILINO_DOMICILIO_EN_LINEA</div>
<svg style="position:absolute;left:1239px;top:854px" width="16" height="14" viewBox="0 0 16 14"><rect x="0.75" y="1" width="14.5" height="12.2" fill="#fff" stroke="#5f646b" stroke-width="1.5"/><rect x="0" y="0" width="16" height="3" fill="#38a852"/><ellipse cx="4.6" cy="8.6" rx="1.9" ry="2.2" fill="none" stroke="#4a7fd9" stroke-width="1.1"/><path d="M6.5 6.2v4.3l0.9 0.4M8.8 4v6.8" fill="none" stroke="#4a7fd9" stroke-width="1.1"/><ellipse cx="10.9" cy="8.6" rx="1.9" ry="2.2" fill="none" stroke="#4a7fd9" stroke-width="1.1"/></svg>
<div style="position:absolute;top:854.19px;font-size:11px;line-height:14px;color:#000;white-space:nowrap;letter-spacing:-0.513px;left:1259.5px;">SEGUNDO_INQUILINO_NIF</div>
<div style="position:absolute;left:1233px;top:366px;width:239px;height:19px;border:2px solid #f5070f"></div>
<div style="position:absolute;left:1233px;top:762px;width:262px;height:19px;border:2px solid #f5070f"></div>
<div style="position:absolute;left:1233px;top:834px;width:255px;height:19px;border:2px solid #f5070f"></div>
<div style="position:absolute;left:1181px;top:879px;width:399px;height:115px;background:#e8ebef;border:1px solid #9aa1a9;border-radius:3px 3px 0 0"></div>
<div style="position:absolute;top:883.69px;font-size:11px;line-height:14px;color:#5e6a88;white-space:nowrap;letter-spacing:-0.011px;left:1186.5px;">Explorador de informes</div>
<svg style="position:absolute;left:1524px;top:883px" width="54" height="14" viewBox="0 0 54 14"><path d="M2.1 4.1h8.8v6.8H2.1z M3.9 5.9v3.2h5.2V5.9z" fill="#4b5058" fill-rule="evenodd"/><path d="M23 2.9h5.2V9H23z M24.1 3.9V8h2.1V3.9z" fill="#4b5058" fill-rule="evenodd"/><rect x="22" y="8" width="7" height="1.2" fill="#4b5058"/><rect x="25.2" y="9" width="1" height="3.3" fill="#4b5058"/><path d="M40.8 4.5L48.6 10.6M48.6 4.5L40.8 10.6" stroke="#4b5058" stroke-width="2.1"/></svg>
<div style="position:absolute;left:1183px;top:902px;width:395px;height:90px;background:#fff;border:1px solid #aab0b7;box-shadow:inset 0 0 0 1px #fff, inset 0 0 0 2px #d5d9de"></div>
<div style="position:absolute;left:320px;top:995px;width:1263px;height:27px;background:linear-gradient(#e1e4e8,#c9cdd2);border-top:1px solid #8f959c;border-left:1px solid #8f959c;border-bottom:1px solid #a3a8ae"></div>
<div style="position:absolute;left:1480px;top:1000px;width:1px;height:17px;background:#a9aeb5"></div>
<div style="position:absolute;top:1002.19px;font-size:11px;line-height:14px;color:#2d2d2d;white-space:nowrap;letter-spacing:-0.227px;left:1490px;">Página 1 de 7</div>
<svg style="position:absolute;left:1570px;top:1008px" width="12" height="12" viewBox="0 0 12 12"><rect x="9" y="2" width="1.5" height="1.5" fill="#8e939a"/><rect x="6" y="5" width="1.5" height="1.5" fill="#8e939a"/><rect x="9" y="5" width="1.5" height="1.5" fill="#8e939a"/><rect x="3" y="8" width="1.5" height="1.5" fill="#8e939a"/><rect x="6" y="8" width="1.5" height="1.5" fill="#8e939a"/><rect x="9" y="8" width="1.5" height="1.5" fill="#8e939a"/></svg>
<div style="position:absolute;left:313px;top:1029px;width:1273px;height:11px;background:linear-gradient(#d5d8dc,#c6cacf)"></div>
<svg style="position:absolute;left:940px;top:360px" width="310" height="345" viewBox="0 0 310 345"><path d="M293.5 15L27 325" stroke="#f5070f" stroke-width="1.9" fill="none"/><path d="M21.5 331.5L25 320L32.5 326.3z" fill="#f5070f"/></svg>
</body></html>
